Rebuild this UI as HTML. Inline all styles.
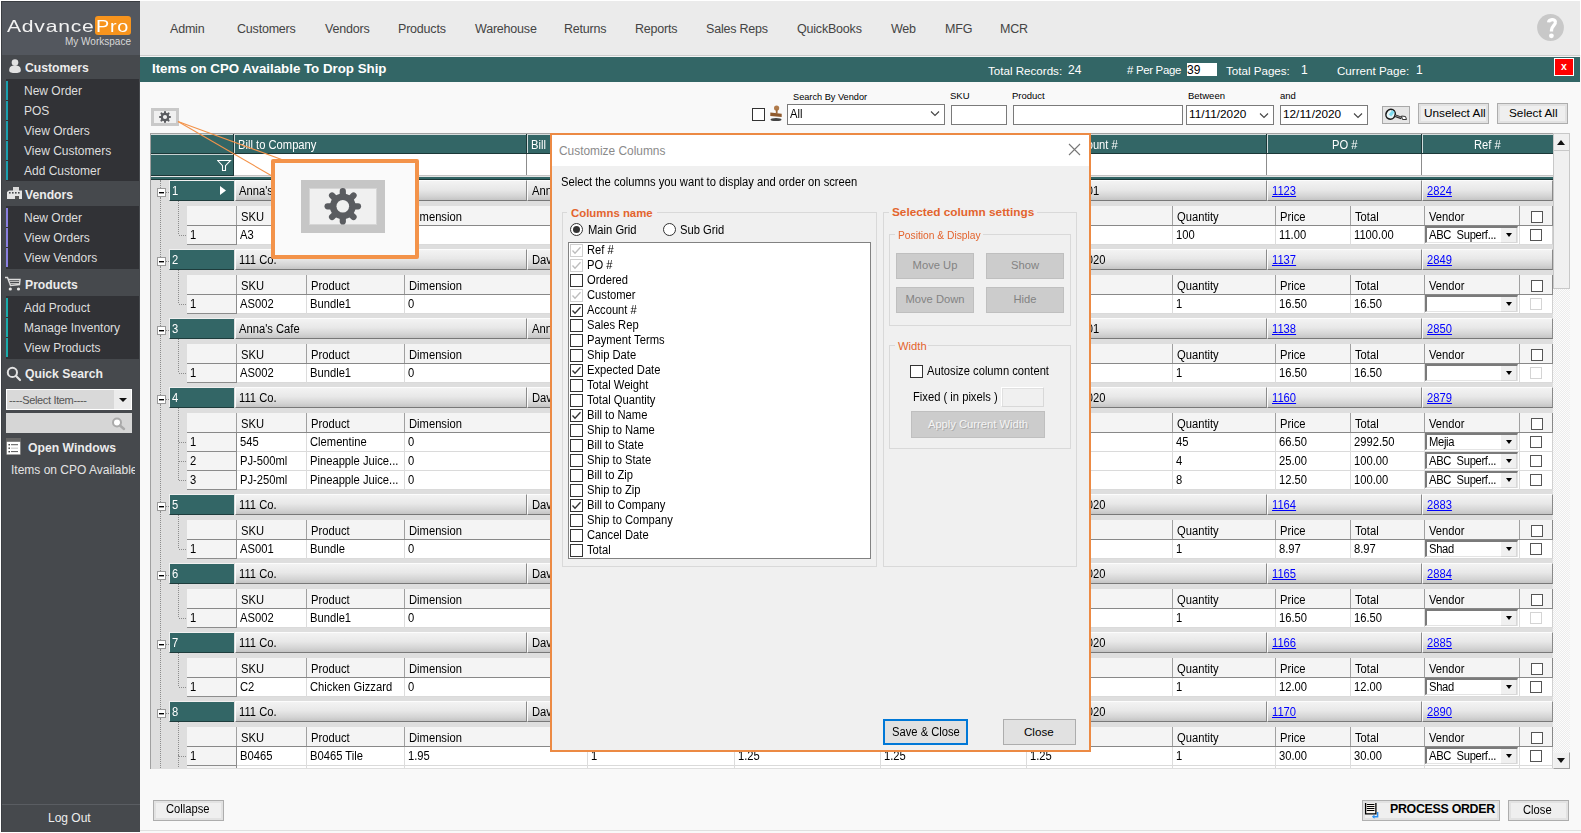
<!DOCTYPE html><html><head><meta charset="utf-8"><style>
*{margin:0;padding:0;box-sizing:border-box}
html,body{width:1581px;height:833px;overflow:hidden;background:#fff}
body{position:relative;font-family:"Liberation Sans",sans-serif;color:#000}
div{position:absolute}
svg{position:absolute}
.t{white-space:nowrap;line-height:1}
.nav{font-size:12.5px;color:#444;letter-spacing:-0.2px}
.sbi{font-size:12px;color:#dedede}
.sbh{font-size:12.2px;font-weight:bold;color:#ececec}
.w{font-size:11.2px}
.gh{background:linear-gradient(#f3f3f3,#e8e8e8 45%,#d4d4d4 80%,#c4c4c4);border-right:1px solid #8a8a8a;border-bottom:1px solid #787878;border-top:1px solid #fcfcfc;border-left:1px solid #fcfcfc}
.lnk{color:#0000ff;text-decoration:underline}
.cb{border:1px solid #333;background:#fff}
</style></head><body>
<div style="left:140px;top:55px;width:1441px;height:778px;background:#f9f9f9"></div>
<div style="left:140px;top:1px;width:1440px;height:54px;background:#ebebeb"></div>
<div style="left:140px;top:55px;width:1440px;height:1px;background:#cdcdcd"></div>
<div style="left:140px;top:56px;width:1440px;height:1px;background:#f4f4f4"></div>
<div class="t nav" style="left:170px;top:23px;">Admin</div>
<div class="t nav" style="left:237px;top:23px;">Customers</div>
<div class="t nav" style="left:325px;top:23px;">Vendors</div>
<div class="t nav" style="left:398px;top:23px;">Products</div>
<div class="t nav" style="left:475px;top:23px;">Warehouse</div>
<div class="t nav" style="left:564px;top:23px;">Returns</div>
<div class="t nav" style="left:635px;top:23px;">Reports</div>
<div class="t nav" style="left:706px;top:23px;">Sales Reps</div>
<div class="t nav" style="left:797px;top:23px;">QuickBooks</div>
<div class="t nav" style="left:891px;top:23px;">Web</div>
<div class="t nav" style="left:945px;top:23px;">MFG</div>
<div class="t nav" style="left:1000px;top:23px;">MCR</div>
<svg style="position:absolute;left:1536px;top:13px" width="29" height="29" viewBox="0 0 29 29"><circle cx="14.5" cy="14.5" r="13.4" fill="#c8c8c8"/><path d="M12.6 9.3 C12.9 6.4 19.1 5.4 19.4 9.2 C19.7 12 15.5 13.4 15.5 17 V18.6" fill="none" stroke="#fff" stroke-width="3.3"/><circle cx="15.4" cy="22.8" r="2.4" fill="#fff"/></svg>
<div style="left:1px;top:1px;width:139px;height:831px;background:#46494d"></div>
<div style="left:1px;top:1px;width:1px;height:831px;background:#3b3e43"></div>
<div style="left:1px;top:1px;width:139px;height:1px;background:#3b3e43"></div>
<div style="left:2px;top:2px;width:138px;height:53px;background:#53575e"></div>
<div class="t" style="left:7px;top:18px;font-size:16.5px;color:#f2f2f2;letter-spacing:0.6px;transform:scaleX(1.28);transform-origin:0 0">Advance</div>
<div style="left:95px;top:16px;width:36px;height:19px;background:#f7941d;border-radius:3px"></div>
<div class="t" style="left:96px;top:18px;font-size:16.5px;color:#fff;letter-spacing:0.6px;transform:scaleX(1.2);transform-origin:0 0">Pro</div>
<div class="t" style="left:65px;top:37px;font-size:10px;color:#d8d8d8">My Workspace</div>
<div class="t sbh" style="left:25px;top:62px;">Customers</div>
<svg style="position:absolute;left:8px;top:58px" width="14" height="16" viewBox="0 0 14 16"><circle cx="7" cy="4.6" r="3.3" fill="#e2e2e2"/><path d="M1.2 12.5 C1.2 8.5 3.5 7.6 7 7.6 C10.5 7.6 12.8 8.5 12.8 12.5 C12.8 14.6 10 15 7 15 C4 15 1.2 14.6 1.2 12.5Z" fill="#e2e2e2"/></svg>
<div style="left:6px;top:79px;width:133px;height:102px;background:#313236"></div>
<div style="left:6px;top:81px;width:2px;height:19px;background:#1b9fae"></div>
<div class="t sbi" style="left:24px;top:85px;">New Order</div>
<div style="left:6px;top:101px;width:2px;height:19px;background:#1b9fae"></div>
<div class="t sbi" style="left:24px;top:105px;">POS</div>
<div style="left:6px;top:121px;width:2px;height:19px;background:#1b9fae"></div>
<div class="t sbi" style="left:24px;top:125px;">View Orders</div>
<div style="left:6px;top:141px;width:2px;height:19px;background:#1b9fae"></div>
<div class="t sbi" style="left:24px;top:145px;">View Customers</div>
<div style="left:6px;top:161px;width:2px;height:19px;background:#1b9fae"></div>
<div class="t sbi" style="left:24px;top:165px;">Add Customer</div>
<div class="t sbh" style="left:25px;top:189px;">Vendors</div>
<svg style="position:absolute;left:6px;top:186px" width="17" height="14" viewBox="0 0 17 14"><rect x="7" y="1" width="6" height="5" fill="#d8d8d8"/><path d="M1 6 L3 4.5 L16 4.5 L16 13 L1 13Z" fill="#e4e4e4"/><rect x="3" y="6" width="1.6" height="1.6" fill="#46494d"/><rect x="6" y="6" width="1.6" height="1.6" fill="#46494d"/><rect x="9" y="6" width="1.6" height="1.6" fill="#46494d"/><rect x="12" y="6" width="1.6" height="1.6" fill="#46494d"/><rect x="9" y="10" width="4" height="3" fill="#555"/></svg>
<div style="left:6px;top:206px;width:133px;height:63px;background:#313236"></div>
<div style="left:6px;top:208px;width:2px;height:19px;background:#8a80e0"></div>
<div class="t sbi" style="left:24px;top:212px;">New Order</div>
<div style="left:6px;top:228px;width:2px;height:19px;background:#8a80e0"></div>
<div class="t sbi" style="left:24px;top:232px;">View Orders</div>
<div style="left:6px;top:248px;width:2px;height:19px;background:#8a80e0"></div>
<div class="t sbi" style="left:24px;top:252px;">View Vendors</div>
<div class="t sbh" style="left:25px;top:279px;">Products</div>
<svg style="position:absolute;left:4px;top:276px" width="18" height="16" viewBox="0 0 18 16"><path d="M1 1.5 L3.5 1.5 L6.5 9.5 L15.5 8.5 L16 3.5 L4.5 3.5" fill="none" stroke="#dcdcdc" stroke-width="1.4"/><path d="M5 5.5 H15 M5.7 7.5 H15" stroke="#bbb" stroke-width="1"/><circle cx="6.3" cy="13" r="1.6" fill="#e6e6e6"/><circle cx="14.5" cy="13" r="1.6" fill="#e6e6e6"/></svg>
<div style="left:6px;top:296px;width:133px;height:63px;background:#313236"></div>
<div style="left:6px;top:298px;width:2px;height:19px;background:#1aabab"></div>
<div class="t sbi" style="left:24px;top:302px;">Add Product</div>
<div style="left:6px;top:318px;width:2px;height:19px;background:#1aabab"></div>
<div class="t sbi" style="left:24px;top:322px;">Manage Inventory</div>
<div style="left:6px;top:338px;width:2px;height:19px;background:#1aabab"></div>
<div class="t sbi" style="left:24px;top:342px;">View Products</div>
<div class="t sbh" style="left:25px;top:368px;">Quick Search</div>
<svg style="position:absolute;left:5px;top:365px" width="18" height="18" viewBox="0 0 18 18"><circle cx="7.4" cy="7.4" r="4.6" fill="none" stroke="#e2e2e2" stroke-width="2"/><path d="M10.8 10.8 L15 15" stroke="#e2e2e2" stroke-width="2.2" stroke-linecap="round"/></svg>
<div style="left:6px;top:389px;width:126px;height:21px;background:#d9d9d9;border:1px solid #fff"></div>
<div style="left:114px;top:390px;width:17px;height:19px;background:#ececec"></div>
<div class="t" style="left:9px;top:395px;font-size:11px;color:#555;letter-spacing:-0.35px">----Select Item----</div>
<div style="left:119px;top:398px;width:0;height:0;border-left:4px solid transparent;border-right:4px solid transparent;border-top:4px solid #111"></div>
<div style="left:6px;top:413px;width:126px;height:20px;background:#d6d6d6"></div>
<svg style="position:absolute;left:110px;top:416px" width="18" height="16" viewBox="0 0 18 16"><circle cx="7" cy="6.5" r="4" fill="#fff" stroke="#aaa" stroke-width="2"/><path d="M10 9.5 L14 13" stroke="#aaa" stroke-width="2.4" stroke-linecap="round"/></svg>
<div class="t sbh" style="left:28px;top:442px;">Open Windows</div>
<svg style="position:absolute;left:6px;top:438px" width="15" height="17" viewBox="0 0 15 17"><rect x="0" y="0" width="15" height="17" fill="#666"/><rect x="0.8" y="3.8" width="13.4" height="12.6" fill="#fff"/><rect x="2.5" y="6" width="1.4" height="1.4" fill="#333"/><rect x="5" y="6.2" width="7" height="1" fill="#555"/><rect x="2.5" y="9.5" width="1.4" height="1.4" fill="#333"/><rect x="5" y="9.6" width="7" height="1.2" fill="#ccc"/><rect x="2.5" y="13" width="1.4" height="1.4" fill="#333"/><rect x="5" y="13.1" width="7" height="1" fill="#555"/></svg>
<div style="left:2px;top:455px;width:133px;height:30px;overflow:hidden"><div class="t" style="left:9px;top:9px;font-size:12px;color:#e4e4e4">Items on CPO Available</div></div>
<div style="left:2px;top:804px;width:138px;height:1px;background:#5a5d62"></div>
<div class="t" style="left:48px;top:812px;font-size:12px;color:#eee">Log Out</div>
<div style="left:140px;top:57px;width:1440px;height:25px;background:#336666"></div>
<div class="t" style="left:152px;top:62px;font-size:13.3px;font-weight:bold;color:#fff">Items on CPO Available To Drop Ship</div>
<div class="t" style="left:988px;top:65px;font-size:11.6px;color:#fff">Total Records:</div>
<div class="t" style="left:1068px;top:64px;font-size:12px;color:#fff">24</div>
<div class="t" style="left:1127px;top:65px;font-size:11.4px;letter-spacing:-0.3px;color:#fff"># Per Page</div>
<div style="left:1187px;top:63px;width:30px;height:13px;background:#fff"></div>
<div class="t" style="left:1187px;top:64px;font-size:12px;color:#000">39</div>
<div class="t" style="left:1226px;top:65px;font-size:11.6px;color:#fff">Total Pages:</div>
<div class="t" style="left:1301px;top:64px;font-size:12px;color:#fff">1</div>
<div class="t" style="left:1337px;top:65px;font-size:11.6px;color:#fff">Current Page:</div>
<div class="t" style="left:1416px;top:64px;font-size:12px;color:#fff">1</div>
<div style="left:1554px;top:58px;width:20px;height:18px;background:#f00;border:1px solid #fff"></div>
<div class="t" style="left:1561px;top:61px;font-size:10.5px;font-weight:bold;color:#fff">x</div>
<div style="left:151px;top:108px;width:28px;height:18px;background:#f0f0f0;border:3px solid #c9c9c9"></div>
<svg style="left:157px;top:109px" width="16" height="16"><g transform="translate(8,8)"><circle r="4.3" fill="#5a5c60"/><line x1="0" y1="-3.6" x2="0" y2="-5" stroke="#5a5c60" stroke-width="2.1" stroke-linecap="round" transform="rotate(0)"/><line x1="0" y1="-3.6" x2="0" y2="-5" stroke="#5a5c60" stroke-width="2.1" stroke-linecap="round" transform="rotate(45)"/><line x1="0" y1="-3.6" x2="0" y2="-5" stroke="#5a5c60" stroke-width="2.1" stroke-linecap="round" transform="rotate(90)"/><line x1="0" y1="-3.6" x2="0" y2="-5" stroke="#5a5c60" stroke-width="2.1" stroke-linecap="round" transform="rotate(135)"/><line x1="0" y1="-3.6" x2="0" y2="-5" stroke="#5a5c60" stroke-width="2.1" stroke-linecap="round" transform="rotate(180)"/><line x1="0" y1="-3.6" x2="0" y2="-5" stroke="#5a5c60" stroke-width="2.1" stroke-linecap="round" transform="rotate(225)"/><line x1="0" y1="-3.6" x2="0" y2="-5" stroke="#5a5c60" stroke-width="2.1" stroke-linecap="round" transform="rotate(270)"/><line x1="0" y1="-3.6" x2="0" y2="-5" stroke="#5a5c60" stroke-width="2.1" stroke-linecap="round" transform="rotate(315)"/><circle r="2.1" fill="#f0f0f0"/></g></svg>
<div style="left:752px;top:108px;width:13px;height:13px;border:1px solid #333;background:#fff"></div>
<svg style="position:absolute;left:769px;top:105px" width="14" height="17" viewBox="0 0 14 17"><circle cx="7.6" cy="3" r="2.6" fill="#b07a4a"/><rect x="6.8" y="4.5" width="1.8" height="4" fill="#a06a3a"/><path d="M1.3 7.5 L12.7 8.8 L12.7 12 L1.3 11 Z" fill="#8f5a2e"/><ellipse cx="7" cy="14.5" rx="5.5" ry="1.6" fill="#444"/></svg>
<div class="t" style="left:793px;top:93px;font-size:9.2px;color:#000">Search By Vendor</div>
<div style="left:787px;top:104px;width:158px;height:21px;background:#fff;border:1px solid #7a7a7a"></div>
<div class="t" style="left:790px;top:109px;font-size:12px;transform:scaleX(0.933);transform-origin:0 0;margin-top:-1px">All</div>
<svg style="position:absolute;left:930px;top:110px" width="10" height="7" viewBox="0 0 10 7"><path d="M1 1.5 L5 5.5 L9 1.5" fill="none" stroke="#444" stroke-width="1.1"/></svg>
<div class="t" style="left:950px;top:91px;font-size:9.5px;color:#000">SKU</div>
<div style="left:951px;top:105px;width:56px;height:20px;background:#fff;border:1px solid #7a7a7a"></div>
<div class="t" style="left:1012px;top:91px;font-size:9.5px;color:#000">Product</div>
<div style="left:1013px;top:105px;width:170px;height:20px;background:#fff;border:1px solid #7a7a7a"></div>
<div class="t" style="left:1188px;top:91px;font-size:9.5px;color:#000">Between</div>
<div style="left:1186px;top:105px;width:88px;height:20px;background:#fff;border:1px solid #7a7a7a"></div>
<div class="t" style="left:1189px;top:109px;font-size:11.8px">11/11/2020</div>
<svg style="position:absolute;left:1259px;top:112px" width="10" height="7" viewBox="0 0 10 7"><path d="M1 1.5 L5 5.5 L9 1.5" fill="none" stroke="#444" stroke-width="1.1"/></svg>
<div class="t" style="left:1280px;top:91px;font-size:9.5px;color:#000">and</div>
<div style="left:1280px;top:105px;width:88px;height:20px;background:#fff;border:1px solid #7a7a7a"></div>
<div class="t" style="left:1283px;top:109px;font-size:11.8px">12/11/2020</div>
<svg style="position:absolute;left:1353px;top:112px" width="10" height="7" viewBox="0 0 10 7"><path d="M1 1.5 L5 5.5 L9 1.5" fill="none" stroke="#444" stroke-width="1.1"/></svg>
<div style="left:1382px;top:106px;width:28px;height:18px;background:#e6e6e6;border:1px solid #a8a8a8"></div>
<svg style="position:absolute;left:1384px;top:107px" width="26" height="16" viewBox="0 0 26 16"><ellipse cx="6.6" cy="7.3" rx="4.6" ry="5" transform="rotate(25 6.6 7.3)" fill="#e8f6f8" stroke="#1a1a1a" stroke-width="1.6"/><path d="M6 8.5 L9.5 4" stroke="#7fdcf0" stroke-width="3"/><path d="M10.5 8.5 L17.5 11" stroke="#222" stroke-width="2.6"/><path d="M11 8.6 L17 10.6" stroke="#bbb" stroke-width="0.7"/><path d="M17.5 9 L21.5 9.5 L22.5 12.5 L18.5 12.5 Z" fill="#fff" stroke="#333" stroke-width="1"/></svg>
<div style="left:1418px;top:103px;width:71px;height:21px;background:#efefef;border:1px solid #adadad;box-shadow:inset 0 0 0 2px #e2e2e2"></div>
<div class="t" style="left:1424px;top:108px;font-size:11.8px">Unselect All</div>
<div style="left:1497px;top:103px;width:71px;height:21px;background:#efefef;border:1px solid #adadad;box-shadow:inset 0 0 0 2px #e2e2e2"></div>
<div class="t" style="left:1509px;top:108px;font-size:11.8px">Select All</div>
<div style="left:150px;top:133px;width:1420px;height:636px;background:#dedede;border:1px solid #a0a0a0;border-right:none;border-bottom:none"></div>
<div style="left:151px;top:134px;width:1402px;height:1px;background:#d6dcdc"></div>
<div style="left:151px;top:135px;width:1402px;height:18px;background:#336666"></div>
<div style="left:151px;top:153px;width:1402px;height:1px;background:#1c3838"></div>
<div style="left:151px;top:154px;width:83px;height:21px;background:#336666"></div>
<div style="left:234px;top:154px;width:1319px;height:21px;background:#fff"></div>
<div style="left:233px;top:154px;width:1px;height:21px;background:#1c3838"></div>
<div style="left:151px;top:175px;width:1402px;height:1px;background:#c4c4c4"></div>
<div style="left:151px;top:154px;width:82px;height:1px;background:#c8d2d2"></div>
<div style="left:151px;top:175px;width:83px;height:1px;background:#1c3838"></div>
<div style="left:151px;top:176px;width:1402px;height:1px;background:#e4e4e4"></div>
<div style="left:151px;top:177px;width:1402px;height:2px;background:#336666"></div>
<div style="left:151px;top:179px;width:1402px;height:1px;background:#1c3838"></div>
<div style="left:233px;top:134px;width:1px;height:19px;background:#1c3838"></div>
<div style="left:234px;top:135px;width:1px;height:18px;background:#d0dcdc"></div>
<div style="left:526px;top:134px;width:1px;height:19px;background:#1c3838"></div>
<div style="left:527px;top:135px;width:1px;height:18px;background:#d0dcdc"></div>
<div style="left:526px;top:154px;width:1px;height:21px;background:#8c8c8c"></div>
<div style="left:1266px;top:134px;width:1px;height:19px;background:#1c3838"></div>
<div style="left:1267px;top:135px;width:1px;height:18px;background:#d0dcdc"></div>
<div style="left:1266px;top:154px;width:1px;height:21px;background:#8c8c8c"></div>
<div style="left:1421px;top:134px;width:1px;height:19px;background:#1c3838"></div>
<div style="left:1422px;top:135px;width:1px;height:18px;background:#d0dcdc"></div>
<div style="left:1421px;top:154px;width:1px;height:21px;background:#8c8c8c"></div>
<div style="left:1553px;top:133px;width:1px;height:636px;background:#c8c8c8"></div>
<div class="t" style="left:238px;top:140px;font-size:12px;transform:scaleX(0.933);transform-origin:0 0;margin-top:-1px;color:#fff">Bill to Company</div>
<div class="t" style="left:531px;top:140px;font-size:12px;transform:scaleX(0.933);transform-origin:0 0;margin-top:-1px;color:#fff">Bill</div>
<div class="t" style="left:1068px;top:140px;font-size:12px;transform:scaleX(0.933);transform-origin:0 0;margin-top:-1px;color:#fff">Account #</div>
<div class="t" style="left:1332px;top:140px;font-size:12px;transform:scaleX(0.933);transform-origin:0 0;margin-top:-1px;color:#fff">PO #</div>
<div class="t" style="left:1474px;top:140px;font-size:12px;transform:scaleX(0.933);transform-origin:0 0;margin-top:-1px;color:#fff">Ref #</div>
<svg style="position:absolute;left:217px;top:160px" width="15" height="12" viewBox="0 0 15 12"><path d="M0.7 0.5 H13.5 L8.5 5.7 V10.5 H5.5 V5.7 Z" fill="none" stroke="#fff" stroke-width="1.1"/></svg>
<div style="left:151px;top:180px;width:1402px;height:588px;overflow:hidden">
<div style="left:9px;top:0px;width:1px;height:8px;border-left:1px dotted #8c8c8c"></div>
<div style="left:15px;top:12px;width:3px;height:1px;border-top:1px dotted #8c8c8c"></div>
<div style="left:6px;top:8px;width:9px;height:9px;background:#fff;border:1px solid #9a9a9a"></div>
<div style="left:8px;top:12px;width:5px;height:1px;background:#000"></div>
<div style="left:8px;top:13px;width:5px;height:1px;background:#999"></div>
<div style="left:18px;top:0px;width:65px;height:21px;background:#336666;border-top:1px solid #f0f0f0;border-left:1px solid #f0f0f0;border-bottom:1px solid #1e3c3c"></div>
<div class="t" style="left:21px;top:6px;font-size:12px;transform:scaleX(0.933);transform-origin:0 0;margin-top:-1px;color:#fff">1</div>
<svg style="left:68px;top:5px" width="8" height="11"><path d="M1 1 L7 5.5 L1 10 Z" fill="#fff"/></svg>
<div class="gh" style="left:84px;top:0px;width:292px;height:21px;"></div>
<div class="t" style="left:88px;top:6px;font-size:12px;transform:scaleX(0.933);transform-origin:0 0;margin-top:-1px">Anna's Cafe</div>
<div class="gh" style="left:376px;top:0px;width:740px;height:21px;"></div>
<div class="t" style="left:381px;top:6px;font-size:12px;transform:scaleX(0.933);transform-origin:0 0;margin-top:-1px">Anna's Cafe</div>
<div class="t" style="left:917.3px;top:6px;font-size:12px;transform:scaleX(0.933);transform-origin:0 0;margin-top:-1px">10001</div>
<div class="gh" style="left:1116px;top:0px;width:155px;height:21px;"></div>
<div class="t" style="left:1121px;top:6px;font-size:12px;transform:scaleX(0.933);transform-origin:0 0;margin-top:-1px;color:#0000ff;text-decoration:underline">1123</div>
<div class="gh" style="left:1271px;top:0px;width:131px;height:21px;"></div>
<div class="t" style="left:1276px;top:6px;font-size:12px;transform:scaleX(0.933);transform-origin:0 0;margin-top:-1px;color:#0000ff;text-decoration:underline">2824</div>
<div style="left:27px;top:21px;width:1px;height:33px;border-left:1px dotted #8c8c8c"></div>
<div style="left:28px;top:55px;width:7px;height:1px;border-top:1px dotted #8c8c8c"></div>
<div style="left:36px;top:26px;width:1366px;height:20px;background:#f4f4f4;border-bottom:1px solid #888;border-right:1px solid #888"></div>
<div style="left:85px;top:26px;width:1px;height:19px;background:#a0a0a0"></div>
<div class="t" style="left:90px;top:32px;font-size:12px;transform:scaleX(0.933);transform-origin:0 0;margin-top:-1px">SKU</div>
<div style="left:155px;top:26px;width:1px;height:19px;background:#a0a0a0"></div>
<div class="t" style="left:160px;top:32px;font-size:12px;transform:scaleX(0.933);transform-origin:0 0;margin-top:-1px">Product</div>
<div style="left:253px;top:26px;width:1px;height:19px;background:#a0a0a0"></div>
<div class="t" style="left:258px;top:32px;font-size:12px;transform:scaleX(0.933);transform-origin:0 0;margin-top:-1px">Dimension</div>
<div style="left:436px;top:26px;width:1px;height:19px;background:#a0a0a0"></div>
<div style="left:583px;top:26px;width:1px;height:19px;background:#a0a0a0"></div>
<div style="left:729px;top:26px;width:1px;height:19px;background:#a0a0a0"></div>
<div style="left:875px;top:26px;width:1px;height:19px;background:#a0a0a0"></div>
<div style="left:1021px;top:26px;width:1px;height:19px;background:#a0a0a0"></div>
<div class="t" style="left:1026px;top:32px;font-size:12px;transform:scaleX(0.933);transform-origin:0 0;margin-top:-1px">Quantity</div>
<div style="left:1124px;top:26px;width:1px;height:19px;background:#a0a0a0"></div>
<div class="t" style="left:1129px;top:32px;font-size:12px;transform:scaleX(0.933);transform-origin:0 0;margin-top:-1px">Price</div>
<div style="left:1199px;top:26px;width:1px;height:19px;background:#a0a0a0"></div>
<div class="t" style="left:1204px;top:32px;font-size:12px;transform:scaleX(0.933);transform-origin:0 0;margin-top:-1px">Total</div>
<div style="left:1273px;top:26px;width:1px;height:19px;background:#a0a0a0"></div>
<div class="t" style="left:1278px;top:32px;font-size:12px;transform:scaleX(0.933);transform-origin:0 0;margin-top:-1px">Vendor</div>
<div style="left:1368px;top:26px;width:1px;height:19px;background:#a0a0a0"></div>
<div style="left:1380px;top:31px;width:12px;height:12px;border:1px solid #555;background:#fff"></div>
<div style="left:36px;top:46px;width:49px;height:19px;background:#f4f4f4;border-bottom:1px solid #8c8c8c"></div>
<div style="left:86px;top:46px;width:1316px;height:19px;background:#fff;border-bottom:1px solid #dadada;border-right:1px solid #d0d0d0"></div>
<div style="left:85px;top:46px;width:1px;height:19px;background:#8c8c8c"></div>
<div style="left:155px;top:46px;width:1px;height:19px;background:#dcdcdc"></div>
<div style="left:253px;top:46px;width:1px;height:19px;background:#dcdcdc"></div>
<div style="left:436px;top:46px;width:1px;height:19px;background:#dcdcdc"></div>
<div style="left:583px;top:46px;width:1px;height:19px;background:#dcdcdc"></div>
<div style="left:729px;top:46px;width:1px;height:19px;background:#dcdcdc"></div>
<div style="left:875px;top:46px;width:1px;height:19px;background:#dcdcdc"></div>
<div style="left:1021px;top:46px;width:1px;height:19px;background:#dcdcdc"></div>
<div style="left:1124px;top:46px;width:1px;height:19px;background:#dcdcdc"></div>
<div style="left:1199px;top:46px;width:1px;height:19px;background:#dcdcdc"></div>
<div style="left:1273px;top:46px;width:1px;height:19px;background:#dcdcdc"></div>
<div style="left:1368px;top:46px;width:1px;height:19px;background:#dcdcdc"></div>
<div class="t" style="left:39px;top:50px;font-size:12px;transform:scaleX(0.933);transform-origin:0 0;margin-top:-1px">1</div>
<div class="t" style="left:89px;top:50px;font-size:12px;transform:scaleX(0.933);transform-origin:0 0;margin-top:-1px">A3</div>
<div class="t" style="left:440px;top:50px;font-size:12px;transform:scaleX(0.933);transform-origin:0 0;margin-top:-1px">1</div>
<div class="t" style="left:587px;top:50px;font-size:12px;transform:scaleX(0.933);transform-origin:0 0;margin-top:-1px">1.25</div>
<div class="t" style="left:733px;top:50px;font-size:12px;transform:scaleX(0.933);transform-origin:0 0;margin-top:-1px">1.25</div>
<div class="t" style="left:879px;top:50px;font-size:12px;transform:scaleX(0.933);transform-origin:0 0;margin-top:-1px">1.25</div>
<div class="t" style="left:1025px;top:50px;font-size:12px;transform:scaleX(0.933);transform-origin:0 0;margin-top:-1px">100</div>
<div class="t" style="left:1128px;top:50px;font-size:12px;transform:scaleX(0.933);transform-origin:0 0;margin-top:-1px">11.00</div>
<div class="t" style="left:1203px;top:50px;font-size:12px;transform:scaleX(0.933);transform-origin:0 0;margin-top:-1px">1100.00</div>
<div style="left:1274px;top:46px;width:93px;height:17px;background:#fff;border-left:2px solid #7a7a7a;border-top:2px solid #7a7a7a;border-right:1px solid #e4e4e4;border-bottom:1px solid #e4e4e4"></div>
<div style="left:1350px;top:48px;width:16px;height:15px;background:#f0f0f0;border-right:1px solid #d8d8d8;border-bottom:1px solid #d8d8d8"></div>
<div class="t" style="left:1278px;top:50px;font-size:12px;transform:scaleX(0.933);transform-origin:0 0;margin-top:-1px;letter-spacing:-0.35px">ABC&nbsp; Superf...</div>
<div style="left:1355px;top:53px;width:0;height:0;border-left:3.5px solid transparent;border-right:3.5px solid transparent;border-top:4px solid #000"></div>
<div style="left:1379px;top:49px;width:12px;height:12px;border:1px solid #555;background:#fff"></div>
<div style="left:9px;top:17px;width:1px;height:60px;border-left:1px dotted #8c8c8c"></div>
<div style="left:15px;top:81px;width:3px;height:1px;border-top:1px dotted #8c8c8c"></div>
<div style="left:6px;top:77px;width:9px;height:9px;background:#fff;border:1px solid #9a9a9a"></div>
<div style="left:8px;top:81px;width:5px;height:1px;background:#000"></div>
<div style="left:8px;top:82px;width:5px;height:1px;background:#999"></div>
<div style="left:18px;top:69px;width:65px;height:21px;background:#336666;border-top:1px solid #f0f0f0;border-left:1px solid #f0f0f0;border-bottom:1px solid #1e3c3c"></div>
<div class="t" style="left:21px;top:75px;font-size:12px;transform:scaleX(0.933);transform-origin:0 0;margin-top:-1px;color:#fff">2</div>
<div class="gh" style="left:84px;top:69px;width:292px;height:21px;"></div>
<div class="t" style="left:88px;top:75px;font-size:12px;transform:scaleX(0.933);transform-origin:0 0;margin-top:-1px">111 Co.</div>
<div class="gh" style="left:376px;top:69px;width:740px;height:21px;"></div>
<div class="t" style="left:381px;top:75px;font-size:12px;transform:scaleX(0.933);transform-origin:0 0;margin-top:-1px">David</div>
<div class="t" style="left:917.0999999999999px;top:75px;font-size:12px;transform:scaleX(0.933);transform-origin:0 0;margin-top:-1px">102020</div>
<div class="gh" style="left:1116px;top:69px;width:155px;height:21px;"></div>
<div class="t" style="left:1121px;top:75px;font-size:12px;transform:scaleX(0.933);transform-origin:0 0;margin-top:-1px;color:#0000ff;text-decoration:underline">1137</div>
<div class="gh" style="left:1271px;top:69px;width:131px;height:21px;"></div>
<div class="t" style="left:1276px;top:75px;font-size:12px;transform:scaleX(0.933);transform-origin:0 0;margin-top:-1px;color:#0000ff;text-decoration:underline">2849</div>
<div style="left:27px;top:90px;width:1px;height:33px;border-left:1px dotted #8c8c8c"></div>
<div style="left:28px;top:124px;width:7px;height:1px;border-top:1px dotted #8c8c8c"></div>
<div style="left:36px;top:95px;width:1366px;height:20px;background:#f4f4f4;border-bottom:1px solid #888;border-right:1px solid #888"></div>
<div style="left:85px;top:95px;width:1px;height:19px;background:#a0a0a0"></div>
<div class="t" style="left:90px;top:101px;font-size:12px;transform:scaleX(0.933);transform-origin:0 0;margin-top:-1px">SKU</div>
<div style="left:155px;top:95px;width:1px;height:19px;background:#a0a0a0"></div>
<div class="t" style="left:160px;top:101px;font-size:12px;transform:scaleX(0.933);transform-origin:0 0;margin-top:-1px">Product</div>
<div style="left:253px;top:95px;width:1px;height:19px;background:#a0a0a0"></div>
<div class="t" style="left:258px;top:101px;font-size:12px;transform:scaleX(0.933);transform-origin:0 0;margin-top:-1px">Dimension</div>
<div style="left:436px;top:95px;width:1px;height:19px;background:#a0a0a0"></div>
<div style="left:583px;top:95px;width:1px;height:19px;background:#a0a0a0"></div>
<div style="left:729px;top:95px;width:1px;height:19px;background:#a0a0a0"></div>
<div style="left:875px;top:95px;width:1px;height:19px;background:#a0a0a0"></div>
<div style="left:1021px;top:95px;width:1px;height:19px;background:#a0a0a0"></div>
<div class="t" style="left:1026px;top:101px;font-size:12px;transform:scaleX(0.933);transform-origin:0 0;margin-top:-1px">Quantity</div>
<div style="left:1124px;top:95px;width:1px;height:19px;background:#a0a0a0"></div>
<div class="t" style="left:1129px;top:101px;font-size:12px;transform:scaleX(0.933);transform-origin:0 0;margin-top:-1px">Price</div>
<div style="left:1199px;top:95px;width:1px;height:19px;background:#a0a0a0"></div>
<div class="t" style="left:1204px;top:101px;font-size:12px;transform:scaleX(0.933);transform-origin:0 0;margin-top:-1px">Total</div>
<div style="left:1273px;top:95px;width:1px;height:19px;background:#a0a0a0"></div>
<div class="t" style="left:1278px;top:101px;font-size:12px;transform:scaleX(0.933);transform-origin:0 0;margin-top:-1px">Vendor</div>
<div style="left:1368px;top:95px;width:1px;height:19px;background:#a0a0a0"></div>
<div style="left:1380px;top:100px;width:12px;height:12px;border:1px solid #555;background:#fff"></div>
<div style="left:36px;top:115px;width:49px;height:19px;background:#f4f4f4;border-bottom:1px solid #8c8c8c"></div>
<div style="left:86px;top:115px;width:1316px;height:19px;background:#fff;border-bottom:1px solid #dadada;border-right:1px solid #d0d0d0"></div>
<div style="left:85px;top:115px;width:1px;height:19px;background:#8c8c8c"></div>
<div style="left:155px;top:115px;width:1px;height:19px;background:#dcdcdc"></div>
<div style="left:253px;top:115px;width:1px;height:19px;background:#dcdcdc"></div>
<div style="left:436px;top:115px;width:1px;height:19px;background:#dcdcdc"></div>
<div style="left:583px;top:115px;width:1px;height:19px;background:#dcdcdc"></div>
<div style="left:729px;top:115px;width:1px;height:19px;background:#dcdcdc"></div>
<div style="left:875px;top:115px;width:1px;height:19px;background:#dcdcdc"></div>
<div style="left:1021px;top:115px;width:1px;height:19px;background:#dcdcdc"></div>
<div style="left:1124px;top:115px;width:1px;height:19px;background:#dcdcdc"></div>
<div style="left:1199px;top:115px;width:1px;height:19px;background:#dcdcdc"></div>
<div style="left:1273px;top:115px;width:1px;height:19px;background:#dcdcdc"></div>
<div style="left:1368px;top:115px;width:1px;height:19px;background:#dcdcdc"></div>
<div class="t" style="left:39px;top:119px;font-size:12px;transform:scaleX(0.933);transform-origin:0 0;margin-top:-1px">1</div>
<div class="t" style="left:89px;top:119px;font-size:12px;transform:scaleX(0.933);transform-origin:0 0;margin-top:-1px">AS002</div>
<div class="t" style="left:159px;top:119px;font-size:12px;transform:scaleX(0.933);transform-origin:0 0;margin-top:-1px">Bundle1</div>
<div class="t" style="left:257px;top:119px;font-size:12px;transform:scaleX(0.933);transform-origin:0 0;margin-top:-1px">0</div>
<div class="t" style="left:440px;top:119px;font-size:12px;transform:scaleX(0.933);transform-origin:0 0;margin-top:-1px">1</div>
<div class="t" style="left:587px;top:119px;font-size:12px;transform:scaleX(0.933);transform-origin:0 0;margin-top:-1px">1.25</div>
<div class="t" style="left:733px;top:119px;font-size:12px;transform:scaleX(0.933);transform-origin:0 0;margin-top:-1px">1.25</div>
<div class="t" style="left:879px;top:119px;font-size:12px;transform:scaleX(0.933);transform-origin:0 0;margin-top:-1px">1.25</div>
<div class="t" style="left:1025px;top:119px;font-size:12px;transform:scaleX(0.933);transform-origin:0 0;margin-top:-1px">1</div>
<div class="t" style="left:1128px;top:119px;font-size:12px;transform:scaleX(0.933);transform-origin:0 0;margin-top:-1px">16.50</div>
<div class="t" style="left:1203px;top:119px;font-size:12px;transform:scaleX(0.933);transform-origin:0 0;margin-top:-1px">16.50</div>
<div style="left:1274px;top:115px;width:93px;height:17px;background:#fff;border-left:2px solid #7a7a7a;border-top:2px solid #7a7a7a;border-right:1px solid #e4e4e4;border-bottom:1px solid #e4e4e4"></div>
<div style="left:1350px;top:117px;width:16px;height:15px;background:#f0f0f0;border-right:1px solid #d8d8d8;border-bottom:1px solid #d8d8d8"></div>
<div style="left:1355px;top:122px;width:0;height:0;border-left:3.5px solid transparent;border-right:3.5px solid transparent;border-top:4px solid #000"></div>
<div style="left:1379px;top:118px;width:12px;height:12px;border:1px solid #d4d4d4;background:#fff"></div>
<div style="left:9px;top:86px;width:1px;height:60px;border-left:1px dotted #8c8c8c"></div>
<div style="left:15px;top:150px;width:3px;height:1px;border-top:1px dotted #8c8c8c"></div>
<div style="left:6px;top:146px;width:9px;height:9px;background:#fff;border:1px solid #9a9a9a"></div>
<div style="left:8px;top:150px;width:5px;height:1px;background:#000"></div>
<div style="left:8px;top:151px;width:5px;height:1px;background:#999"></div>
<div style="left:18px;top:138px;width:65px;height:21px;background:#336666;border-top:1px solid #f0f0f0;border-left:1px solid #f0f0f0;border-bottom:1px solid #1e3c3c"></div>
<div class="t" style="left:21px;top:144px;font-size:12px;transform:scaleX(0.933);transform-origin:0 0;margin-top:-1px;color:#fff">3</div>
<div class="gh" style="left:84px;top:138px;width:292px;height:21px;"></div>
<div class="t" style="left:88px;top:144px;font-size:12px;transform:scaleX(0.933);transform-origin:0 0;margin-top:-1px">Anna's Cafe</div>
<div class="gh" style="left:376px;top:138px;width:740px;height:21px;"></div>
<div class="t" style="left:381px;top:144px;font-size:12px;transform:scaleX(0.933);transform-origin:0 0;margin-top:-1px">Anna's Cafe</div>
<div class="t" style="left:917.3px;top:144px;font-size:12px;transform:scaleX(0.933);transform-origin:0 0;margin-top:-1px">10001</div>
<div class="gh" style="left:1116px;top:138px;width:155px;height:21px;"></div>
<div class="t" style="left:1121px;top:144px;font-size:12px;transform:scaleX(0.933);transform-origin:0 0;margin-top:-1px;color:#0000ff;text-decoration:underline">1138</div>
<div class="gh" style="left:1271px;top:138px;width:131px;height:21px;"></div>
<div class="t" style="left:1276px;top:144px;font-size:12px;transform:scaleX(0.933);transform-origin:0 0;margin-top:-1px;color:#0000ff;text-decoration:underline">2850</div>
<div style="left:27px;top:159px;width:1px;height:33px;border-left:1px dotted #8c8c8c"></div>
<div style="left:28px;top:193px;width:7px;height:1px;border-top:1px dotted #8c8c8c"></div>
<div style="left:36px;top:164px;width:1366px;height:20px;background:#f4f4f4;border-bottom:1px solid #888;border-right:1px solid #888"></div>
<div style="left:85px;top:164px;width:1px;height:19px;background:#a0a0a0"></div>
<div class="t" style="left:90px;top:170px;font-size:12px;transform:scaleX(0.933);transform-origin:0 0;margin-top:-1px">SKU</div>
<div style="left:155px;top:164px;width:1px;height:19px;background:#a0a0a0"></div>
<div class="t" style="left:160px;top:170px;font-size:12px;transform:scaleX(0.933);transform-origin:0 0;margin-top:-1px">Product</div>
<div style="left:253px;top:164px;width:1px;height:19px;background:#a0a0a0"></div>
<div class="t" style="left:258px;top:170px;font-size:12px;transform:scaleX(0.933);transform-origin:0 0;margin-top:-1px">Dimension</div>
<div style="left:436px;top:164px;width:1px;height:19px;background:#a0a0a0"></div>
<div style="left:583px;top:164px;width:1px;height:19px;background:#a0a0a0"></div>
<div style="left:729px;top:164px;width:1px;height:19px;background:#a0a0a0"></div>
<div style="left:875px;top:164px;width:1px;height:19px;background:#a0a0a0"></div>
<div style="left:1021px;top:164px;width:1px;height:19px;background:#a0a0a0"></div>
<div class="t" style="left:1026px;top:170px;font-size:12px;transform:scaleX(0.933);transform-origin:0 0;margin-top:-1px">Quantity</div>
<div style="left:1124px;top:164px;width:1px;height:19px;background:#a0a0a0"></div>
<div class="t" style="left:1129px;top:170px;font-size:12px;transform:scaleX(0.933);transform-origin:0 0;margin-top:-1px">Price</div>
<div style="left:1199px;top:164px;width:1px;height:19px;background:#a0a0a0"></div>
<div class="t" style="left:1204px;top:170px;font-size:12px;transform:scaleX(0.933);transform-origin:0 0;margin-top:-1px">Total</div>
<div style="left:1273px;top:164px;width:1px;height:19px;background:#a0a0a0"></div>
<div class="t" style="left:1278px;top:170px;font-size:12px;transform:scaleX(0.933);transform-origin:0 0;margin-top:-1px">Vendor</div>
<div style="left:1368px;top:164px;width:1px;height:19px;background:#a0a0a0"></div>
<div style="left:1380px;top:169px;width:12px;height:12px;border:1px solid #555;background:#fff"></div>
<div style="left:36px;top:184px;width:49px;height:19px;background:#f4f4f4;border-bottom:1px solid #8c8c8c"></div>
<div style="left:86px;top:184px;width:1316px;height:19px;background:#fff;border-bottom:1px solid #dadada;border-right:1px solid #d0d0d0"></div>
<div style="left:85px;top:184px;width:1px;height:19px;background:#8c8c8c"></div>
<div style="left:155px;top:184px;width:1px;height:19px;background:#dcdcdc"></div>
<div style="left:253px;top:184px;width:1px;height:19px;background:#dcdcdc"></div>
<div style="left:436px;top:184px;width:1px;height:19px;background:#dcdcdc"></div>
<div style="left:583px;top:184px;width:1px;height:19px;background:#dcdcdc"></div>
<div style="left:729px;top:184px;width:1px;height:19px;background:#dcdcdc"></div>
<div style="left:875px;top:184px;width:1px;height:19px;background:#dcdcdc"></div>
<div style="left:1021px;top:184px;width:1px;height:19px;background:#dcdcdc"></div>
<div style="left:1124px;top:184px;width:1px;height:19px;background:#dcdcdc"></div>
<div style="left:1199px;top:184px;width:1px;height:19px;background:#dcdcdc"></div>
<div style="left:1273px;top:184px;width:1px;height:19px;background:#dcdcdc"></div>
<div style="left:1368px;top:184px;width:1px;height:19px;background:#dcdcdc"></div>
<div class="t" style="left:39px;top:188px;font-size:12px;transform:scaleX(0.933);transform-origin:0 0;margin-top:-1px">1</div>
<div class="t" style="left:89px;top:188px;font-size:12px;transform:scaleX(0.933);transform-origin:0 0;margin-top:-1px">AS002</div>
<div class="t" style="left:159px;top:188px;font-size:12px;transform:scaleX(0.933);transform-origin:0 0;margin-top:-1px">Bundle1</div>
<div class="t" style="left:257px;top:188px;font-size:12px;transform:scaleX(0.933);transform-origin:0 0;margin-top:-1px">0</div>
<div class="t" style="left:440px;top:188px;font-size:12px;transform:scaleX(0.933);transform-origin:0 0;margin-top:-1px">1</div>
<div class="t" style="left:587px;top:188px;font-size:12px;transform:scaleX(0.933);transform-origin:0 0;margin-top:-1px">1.25</div>
<div class="t" style="left:733px;top:188px;font-size:12px;transform:scaleX(0.933);transform-origin:0 0;margin-top:-1px">1.25</div>
<div class="t" style="left:879px;top:188px;font-size:12px;transform:scaleX(0.933);transform-origin:0 0;margin-top:-1px">1.25</div>
<div class="t" style="left:1025px;top:188px;font-size:12px;transform:scaleX(0.933);transform-origin:0 0;margin-top:-1px">1</div>
<div class="t" style="left:1128px;top:188px;font-size:12px;transform:scaleX(0.933);transform-origin:0 0;margin-top:-1px">16.50</div>
<div class="t" style="left:1203px;top:188px;font-size:12px;transform:scaleX(0.933);transform-origin:0 0;margin-top:-1px">16.50</div>
<div style="left:1274px;top:184px;width:93px;height:17px;background:#fff;border-left:2px solid #7a7a7a;border-top:2px solid #7a7a7a;border-right:1px solid #e4e4e4;border-bottom:1px solid #e4e4e4"></div>
<div style="left:1350px;top:186px;width:16px;height:15px;background:#f0f0f0;border-right:1px solid #d8d8d8;border-bottom:1px solid #d8d8d8"></div>
<div style="left:1355px;top:191px;width:0;height:0;border-left:3.5px solid transparent;border-right:3.5px solid transparent;border-top:4px solid #000"></div>
<div style="left:1379px;top:187px;width:12px;height:12px;border:1px solid #d4d4d4;background:#fff"></div>
<div style="left:9px;top:155px;width:1px;height:60px;border-left:1px dotted #8c8c8c"></div>
<div style="left:15px;top:219px;width:3px;height:1px;border-top:1px dotted #8c8c8c"></div>
<div style="left:6px;top:215px;width:9px;height:9px;background:#fff;border:1px solid #9a9a9a"></div>
<div style="left:8px;top:219px;width:5px;height:1px;background:#000"></div>
<div style="left:8px;top:220px;width:5px;height:1px;background:#999"></div>
<div style="left:18px;top:207px;width:65px;height:21px;background:#336666;border-top:1px solid #f0f0f0;border-left:1px solid #f0f0f0;border-bottom:1px solid #1e3c3c"></div>
<div class="t" style="left:21px;top:213px;font-size:12px;transform:scaleX(0.933);transform-origin:0 0;margin-top:-1px;color:#fff">4</div>
<div class="gh" style="left:84px;top:207px;width:292px;height:21px;"></div>
<div class="t" style="left:88px;top:213px;font-size:12px;transform:scaleX(0.933);transform-origin:0 0;margin-top:-1px">111 Co.</div>
<div class="gh" style="left:376px;top:207px;width:740px;height:21px;"></div>
<div class="t" style="left:381px;top:213px;font-size:12px;transform:scaleX(0.933);transform-origin:0 0;margin-top:-1px">David</div>
<div class="t" style="left:917.0999999999999px;top:213px;font-size:12px;transform:scaleX(0.933);transform-origin:0 0;margin-top:-1px">102020</div>
<div class="gh" style="left:1116px;top:207px;width:155px;height:21px;"></div>
<div class="t" style="left:1121px;top:213px;font-size:12px;transform:scaleX(0.933);transform-origin:0 0;margin-top:-1px;color:#0000ff;text-decoration:underline">1160</div>
<div class="gh" style="left:1271px;top:207px;width:131px;height:21px;"></div>
<div class="t" style="left:1276px;top:213px;font-size:12px;transform:scaleX(0.933);transform-origin:0 0;margin-top:-1px;color:#0000ff;text-decoration:underline">2879</div>
<div style="left:27px;top:228px;width:1px;height:33px;border-left:1px dotted #8c8c8c"></div>
<div style="left:28px;top:262px;width:7px;height:1px;border-top:1px dotted #8c8c8c"></div>
<div style="left:28px;top:281px;width:7px;height:1px;border-top:1px dotted #8c8c8c"></div>
<div style="left:28px;top:300px;width:7px;height:1px;border-top:1px dotted #8c8c8c"></div>
<div style="left:27px;top:261px;width:1px;height:39px;border-left:1px dotted #8c8c8c"></div>
<div style="left:36px;top:233px;width:1366px;height:20px;background:#f4f4f4;border-bottom:1px solid #888;border-right:1px solid #888"></div>
<div style="left:85px;top:233px;width:1px;height:19px;background:#a0a0a0"></div>
<div class="t" style="left:90px;top:239px;font-size:12px;transform:scaleX(0.933);transform-origin:0 0;margin-top:-1px">SKU</div>
<div style="left:155px;top:233px;width:1px;height:19px;background:#a0a0a0"></div>
<div class="t" style="left:160px;top:239px;font-size:12px;transform:scaleX(0.933);transform-origin:0 0;margin-top:-1px">Product</div>
<div style="left:253px;top:233px;width:1px;height:19px;background:#a0a0a0"></div>
<div class="t" style="left:258px;top:239px;font-size:12px;transform:scaleX(0.933);transform-origin:0 0;margin-top:-1px">Dimension</div>
<div style="left:436px;top:233px;width:1px;height:19px;background:#a0a0a0"></div>
<div style="left:583px;top:233px;width:1px;height:19px;background:#a0a0a0"></div>
<div style="left:729px;top:233px;width:1px;height:19px;background:#a0a0a0"></div>
<div style="left:875px;top:233px;width:1px;height:19px;background:#a0a0a0"></div>
<div style="left:1021px;top:233px;width:1px;height:19px;background:#a0a0a0"></div>
<div class="t" style="left:1026px;top:239px;font-size:12px;transform:scaleX(0.933);transform-origin:0 0;margin-top:-1px">Quantity</div>
<div style="left:1124px;top:233px;width:1px;height:19px;background:#a0a0a0"></div>
<div class="t" style="left:1129px;top:239px;font-size:12px;transform:scaleX(0.933);transform-origin:0 0;margin-top:-1px">Price</div>
<div style="left:1199px;top:233px;width:1px;height:19px;background:#a0a0a0"></div>
<div class="t" style="left:1204px;top:239px;font-size:12px;transform:scaleX(0.933);transform-origin:0 0;margin-top:-1px">Total</div>
<div style="left:1273px;top:233px;width:1px;height:19px;background:#a0a0a0"></div>
<div class="t" style="left:1278px;top:239px;font-size:12px;transform:scaleX(0.933);transform-origin:0 0;margin-top:-1px">Vendor</div>
<div style="left:1368px;top:233px;width:1px;height:19px;background:#a0a0a0"></div>
<div style="left:1380px;top:238px;width:12px;height:12px;border:1px solid #555;background:#fff"></div>
<div style="left:36px;top:253px;width:49px;height:19px;background:#f4f4f4;border-bottom:1px solid #8c8c8c"></div>
<div style="left:86px;top:253px;width:1316px;height:19px;background:#fff;border-bottom:1px solid #dadada;border-right:1px solid #d0d0d0"></div>
<div style="left:85px;top:253px;width:1px;height:19px;background:#8c8c8c"></div>
<div style="left:155px;top:253px;width:1px;height:19px;background:#dcdcdc"></div>
<div style="left:253px;top:253px;width:1px;height:19px;background:#dcdcdc"></div>
<div style="left:436px;top:253px;width:1px;height:19px;background:#dcdcdc"></div>
<div style="left:583px;top:253px;width:1px;height:19px;background:#dcdcdc"></div>
<div style="left:729px;top:253px;width:1px;height:19px;background:#dcdcdc"></div>
<div style="left:875px;top:253px;width:1px;height:19px;background:#dcdcdc"></div>
<div style="left:1021px;top:253px;width:1px;height:19px;background:#dcdcdc"></div>
<div style="left:1124px;top:253px;width:1px;height:19px;background:#dcdcdc"></div>
<div style="left:1199px;top:253px;width:1px;height:19px;background:#dcdcdc"></div>
<div style="left:1273px;top:253px;width:1px;height:19px;background:#dcdcdc"></div>
<div style="left:1368px;top:253px;width:1px;height:19px;background:#dcdcdc"></div>
<div class="t" style="left:39px;top:257px;font-size:12px;transform:scaleX(0.933);transform-origin:0 0;margin-top:-1px">1</div>
<div class="t" style="left:89px;top:257px;font-size:12px;transform:scaleX(0.933);transform-origin:0 0;margin-top:-1px">545</div>
<div class="t" style="left:159px;top:257px;font-size:12px;transform:scaleX(0.933);transform-origin:0 0;margin-top:-1px">Clementine</div>
<div class="t" style="left:257px;top:257px;font-size:12px;transform:scaleX(0.933);transform-origin:0 0;margin-top:-1px">0</div>
<div class="t" style="left:440px;top:257px;font-size:12px;transform:scaleX(0.933);transform-origin:0 0;margin-top:-1px">1</div>
<div class="t" style="left:587px;top:257px;font-size:12px;transform:scaleX(0.933);transform-origin:0 0;margin-top:-1px">1.25</div>
<div class="t" style="left:733px;top:257px;font-size:12px;transform:scaleX(0.933);transform-origin:0 0;margin-top:-1px">1.25</div>
<div class="t" style="left:879px;top:257px;font-size:12px;transform:scaleX(0.933);transform-origin:0 0;margin-top:-1px">1.25</div>
<div class="t" style="left:1025px;top:257px;font-size:12px;transform:scaleX(0.933);transform-origin:0 0;margin-top:-1px">45</div>
<div class="t" style="left:1128px;top:257px;font-size:12px;transform:scaleX(0.933);transform-origin:0 0;margin-top:-1px">66.50</div>
<div class="t" style="left:1203px;top:257px;font-size:12px;transform:scaleX(0.933);transform-origin:0 0;margin-top:-1px">2992.50</div>
<div style="left:1274px;top:253px;width:93px;height:17px;background:#fff;border-left:2px solid #7a7a7a;border-top:2px solid #7a7a7a;border-right:1px solid #e4e4e4;border-bottom:1px solid #e4e4e4"></div>
<div style="left:1350px;top:255px;width:16px;height:15px;background:#f0f0f0;border-right:1px solid #d8d8d8;border-bottom:1px solid #d8d8d8"></div>
<div class="t" style="left:1278px;top:257px;font-size:12px;transform:scaleX(0.933);transform-origin:0 0;margin-top:-1px;letter-spacing:-0.35px">Mejia</div>
<div style="left:1355px;top:260px;width:0;height:0;border-left:3.5px solid transparent;border-right:3.5px solid transparent;border-top:4px solid #000"></div>
<div style="left:1379px;top:256px;width:12px;height:12px;border:1px solid #555;background:#fff"></div>
<div style="left:36px;top:272px;width:49px;height:19px;background:#f4f4f4;border-bottom:1px solid #8c8c8c"></div>
<div style="left:86px;top:272px;width:1316px;height:19px;background:#fff;border-bottom:1px solid #dadada;border-right:1px solid #d0d0d0"></div>
<div style="left:85px;top:272px;width:1px;height:19px;background:#8c8c8c"></div>
<div style="left:155px;top:272px;width:1px;height:19px;background:#dcdcdc"></div>
<div style="left:253px;top:272px;width:1px;height:19px;background:#dcdcdc"></div>
<div style="left:436px;top:272px;width:1px;height:19px;background:#dcdcdc"></div>
<div style="left:583px;top:272px;width:1px;height:19px;background:#dcdcdc"></div>
<div style="left:729px;top:272px;width:1px;height:19px;background:#dcdcdc"></div>
<div style="left:875px;top:272px;width:1px;height:19px;background:#dcdcdc"></div>
<div style="left:1021px;top:272px;width:1px;height:19px;background:#dcdcdc"></div>
<div style="left:1124px;top:272px;width:1px;height:19px;background:#dcdcdc"></div>
<div style="left:1199px;top:272px;width:1px;height:19px;background:#dcdcdc"></div>
<div style="left:1273px;top:272px;width:1px;height:19px;background:#dcdcdc"></div>
<div style="left:1368px;top:272px;width:1px;height:19px;background:#dcdcdc"></div>
<div class="t" style="left:39px;top:276px;font-size:12px;transform:scaleX(0.933);transform-origin:0 0;margin-top:-1px">2</div>
<div class="t" style="left:89px;top:276px;font-size:12px;transform:scaleX(0.933);transform-origin:0 0;margin-top:-1px">PJ-500ml</div>
<div class="t" style="left:159px;top:276px;font-size:12px;transform:scaleX(0.933);transform-origin:0 0;margin-top:-1px">Pineapple Juice...</div>
<div class="t" style="left:257px;top:276px;font-size:12px;transform:scaleX(0.933);transform-origin:0 0;margin-top:-1px">0</div>
<div class="t" style="left:440px;top:276px;font-size:12px;transform:scaleX(0.933);transform-origin:0 0;margin-top:-1px">1</div>
<div class="t" style="left:587px;top:276px;font-size:12px;transform:scaleX(0.933);transform-origin:0 0;margin-top:-1px">1.25</div>
<div class="t" style="left:733px;top:276px;font-size:12px;transform:scaleX(0.933);transform-origin:0 0;margin-top:-1px">1.25</div>
<div class="t" style="left:879px;top:276px;font-size:12px;transform:scaleX(0.933);transform-origin:0 0;margin-top:-1px">1.25</div>
<div class="t" style="left:1025px;top:276px;font-size:12px;transform:scaleX(0.933);transform-origin:0 0;margin-top:-1px">4</div>
<div class="t" style="left:1128px;top:276px;font-size:12px;transform:scaleX(0.933);transform-origin:0 0;margin-top:-1px">25.00</div>
<div class="t" style="left:1203px;top:276px;font-size:12px;transform:scaleX(0.933);transform-origin:0 0;margin-top:-1px">100.00</div>
<div style="left:1274px;top:272px;width:93px;height:17px;background:#fff;border-left:2px solid #7a7a7a;border-top:2px solid #7a7a7a;border-right:1px solid #e4e4e4;border-bottom:1px solid #e4e4e4"></div>
<div style="left:1350px;top:274px;width:16px;height:15px;background:#f0f0f0;border-right:1px solid #d8d8d8;border-bottom:1px solid #d8d8d8"></div>
<div class="t" style="left:1278px;top:276px;font-size:12px;transform:scaleX(0.933);transform-origin:0 0;margin-top:-1px;letter-spacing:-0.35px">ABC&nbsp; Superf...</div>
<div style="left:1355px;top:279px;width:0;height:0;border-left:3.5px solid transparent;border-right:3.5px solid transparent;border-top:4px solid #000"></div>
<div style="left:1379px;top:275px;width:12px;height:12px;border:1px solid #555;background:#fff"></div>
<div style="left:36px;top:291px;width:49px;height:19px;background:#f4f4f4;border-bottom:1px solid #8c8c8c"></div>
<div style="left:86px;top:291px;width:1316px;height:19px;background:#fff;border-bottom:1px solid #dadada;border-right:1px solid #d0d0d0"></div>
<div style="left:85px;top:291px;width:1px;height:19px;background:#8c8c8c"></div>
<div style="left:155px;top:291px;width:1px;height:19px;background:#dcdcdc"></div>
<div style="left:253px;top:291px;width:1px;height:19px;background:#dcdcdc"></div>
<div style="left:436px;top:291px;width:1px;height:19px;background:#dcdcdc"></div>
<div style="left:583px;top:291px;width:1px;height:19px;background:#dcdcdc"></div>
<div style="left:729px;top:291px;width:1px;height:19px;background:#dcdcdc"></div>
<div style="left:875px;top:291px;width:1px;height:19px;background:#dcdcdc"></div>
<div style="left:1021px;top:291px;width:1px;height:19px;background:#dcdcdc"></div>
<div style="left:1124px;top:291px;width:1px;height:19px;background:#dcdcdc"></div>
<div style="left:1199px;top:291px;width:1px;height:19px;background:#dcdcdc"></div>
<div style="left:1273px;top:291px;width:1px;height:19px;background:#dcdcdc"></div>
<div style="left:1368px;top:291px;width:1px;height:19px;background:#dcdcdc"></div>
<div class="t" style="left:39px;top:295px;font-size:12px;transform:scaleX(0.933);transform-origin:0 0;margin-top:-1px">3</div>
<div class="t" style="left:89px;top:295px;font-size:12px;transform:scaleX(0.933);transform-origin:0 0;margin-top:-1px">PJ-250ml</div>
<div class="t" style="left:159px;top:295px;font-size:12px;transform:scaleX(0.933);transform-origin:0 0;margin-top:-1px">Pineapple Juice...</div>
<div class="t" style="left:257px;top:295px;font-size:12px;transform:scaleX(0.933);transform-origin:0 0;margin-top:-1px">0</div>
<div class="t" style="left:440px;top:295px;font-size:12px;transform:scaleX(0.933);transform-origin:0 0;margin-top:-1px">1</div>
<div class="t" style="left:587px;top:295px;font-size:12px;transform:scaleX(0.933);transform-origin:0 0;margin-top:-1px">1.25</div>
<div class="t" style="left:733px;top:295px;font-size:12px;transform:scaleX(0.933);transform-origin:0 0;margin-top:-1px">1.25</div>
<div class="t" style="left:879px;top:295px;font-size:12px;transform:scaleX(0.933);transform-origin:0 0;margin-top:-1px">1.25</div>
<div class="t" style="left:1025px;top:295px;font-size:12px;transform:scaleX(0.933);transform-origin:0 0;margin-top:-1px">8</div>
<div class="t" style="left:1128px;top:295px;font-size:12px;transform:scaleX(0.933);transform-origin:0 0;margin-top:-1px">12.50</div>
<div class="t" style="left:1203px;top:295px;font-size:12px;transform:scaleX(0.933);transform-origin:0 0;margin-top:-1px">100.00</div>
<div style="left:1274px;top:291px;width:93px;height:17px;background:#fff;border-left:2px solid #7a7a7a;border-top:2px solid #7a7a7a;border-right:1px solid #e4e4e4;border-bottom:1px solid #e4e4e4"></div>
<div style="left:1350px;top:293px;width:16px;height:15px;background:#f0f0f0;border-right:1px solid #d8d8d8;border-bottom:1px solid #d8d8d8"></div>
<div class="t" style="left:1278px;top:295px;font-size:12px;transform:scaleX(0.933);transform-origin:0 0;margin-top:-1px;letter-spacing:-0.35px">ABC&nbsp; Superf...</div>
<div style="left:1355px;top:298px;width:0;height:0;border-left:3.5px solid transparent;border-right:3.5px solid transparent;border-top:4px solid #000"></div>
<div style="left:1379px;top:294px;width:12px;height:12px;border:1px solid #555;background:#fff"></div>
<div style="left:9px;top:224px;width:1px;height:98px;border-left:1px dotted #8c8c8c"></div>
<div style="left:15px;top:326px;width:3px;height:1px;border-top:1px dotted #8c8c8c"></div>
<div style="left:6px;top:322px;width:9px;height:9px;background:#fff;border:1px solid #9a9a9a"></div>
<div style="left:8px;top:326px;width:5px;height:1px;background:#000"></div>
<div style="left:8px;top:327px;width:5px;height:1px;background:#999"></div>
<div style="left:18px;top:314px;width:65px;height:21px;background:#336666;border-top:1px solid #f0f0f0;border-left:1px solid #f0f0f0;border-bottom:1px solid #1e3c3c"></div>
<div class="t" style="left:21px;top:320px;font-size:12px;transform:scaleX(0.933);transform-origin:0 0;margin-top:-1px;color:#fff">5</div>
<div class="gh" style="left:84px;top:314px;width:292px;height:21px;"></div>
<div class="t" style="left:88px;top:320px;font-size:12px;transform:scaleX(0.933);transform-origin:0 0;margin-top:-1px">111 Co.</div>
<div class="gh" style="left:376px;top:314px;width:740px;height:21px;"></div>
<div class="t" style="left:381px;top:320px;font-size:12px;transform:scaleX(0.933);transform-origin:0 0;margin-top:-1px">David</div>
<div class="t" style="left:917.0999999999999px;top:320px;font-size:12px;transform:scaleX(0.933);transform-origin:0 0;margin-top:-1px">102020</div>
<div class="gh" style="left:1116px;top:314px;width:155px;height:21px;"></div>
<div class="t" style="left:1121px;top:320px;font-size:12px;transform:scaleX(0.933);transform-origin:0 0;margin-top:-1px;color:#0000ff;text-decoration:underline">1164</div>
<div class="gh" style="left:1271px;top:314px;width:131px;height:21px;"></div>
<div class="t" style="left:1276px;top:320px;font-size:12px;transform:scaleX(0.933);transform-origin:0 0;margin-top:-1px;color:#0000ff;text-decoration:underline">2883</div>
<div style="left:27px;top:335px;width:1px;height:33px;border-left:1px dotted #8c8c8c"></div>
<div style="left:28px;top:369px;width:7px;height:1px;border-top:1px dotted #8c8c8c"></div>
<div style="left:36px;top:340px;width:1366px;height:20px;background:#f4f4f4;border-bottom:1px solid #888;border-right:1px solid #888"></div>
<div style="left:85px;top:340px;width:1px;height:19px;background:#a0a0a0"></div>
<div class="t" style="left:90px;top:346px;font-size:12px;transform:scaleX(0.933);transform-origin:0 0;margin-top:-1px">SKU</div>
<div style="left:155px;top:340px;width:1px;height:19px;background:#a0a0a0"></div>
<div class="t" style="left:160px;top:346px;font-size:12px;transform:scaleX(0.933);transform-origin:0 0;margin-top:-1px">Product</div>
<div style="left:253px;top:340px;width:1px;height:19px;background:#a0a0a0"></div>
<div class="t" style="left:258px;top:346px;font-size:12px;transform:scaleX(0.933);transform-origin:0 0;margin-top:-1px">Dimension</div>
<div style="left:436px;top:340px;width:1px;height:19px;background:#a0a0a0"></div>
<div style="left:583px;top:340px;width:1px;height:19px;background:#a0a0a0"></div>
<div style="left:729px;top:340px;width:1px;height:19px;background:#a0a0a0"></div>
<div style="left:875px;top:340px;width:1px;height:19px;background:#a0a0a0"></div>
<div style="left:1021px;top:340px;width:1px;height:19px;background:#a0a0a0"></div>
<div class="t" style="left:1026px;top:346px;font-size:12px;transform:scaleX(0.933);transform-origin:0 0;margin-top:-1px">Quantity</div>
<div style="left:1124px;top:340px;width:1px;height:19px;background:#a0a0a0"></div>
<div class="t" style="left:1129px;top:346px;font-size:12px;transform:scaleX(0.933);transform-origin:0 0;margin-top:-1px">Price</div>
<div style="left:1199px;top:340px;width:1px;height:19px;background:#a0a0a0"></div>
<div class="t" style="left:1204px;top:346px;font-size:12px;transform:scaleX(0.933);transform-origin:0 0;margin-top:-1px">Total</div>
<div style="left:1273px;top:340px;width:1px;height:19px;background:#a0a0a0"></div>
<div class="t" style="left:1278px;top:346px;font-size:12px;transform:scaleX(0.933);transform-origin:0 0;margin-top:-1px">Vendor</div>
<div style="left:1368px;top:340px;width:1px;height:19px;background:#a0a0a0"></div>
<div style="left:1380px;top:345px;width:12px;height:12px;border:1px solid #555;background:#fff"></div>
<div style="left:36px;top:360px;width:49px;height:19px;background:#f4f4f4;border-bottom:1px solid #8c8c8c"></div>
<div style="left:86px;top:360px;width:1316px;height:19px;background:#fff;border-bottom:1px solid #dadada;border-right:1px solid #d0d0d0"></div>
<div style="left:85px;top:360px;width:1px;height:19px;background:#8c8c8c"></div>
<div style="left:155px;top:360px;width:1px;height:19px;background:#dcdcdc"></div>
<div style="left:253px;top:360px;width:1px;height:19px;background:#dcdcdc"></div>
<div style="left:436px;top:360px;width:1px;height:19px;background:#dcdcdc"></div>
<div style="left:583px;top:360px;width:1px;height:19px;background:#dcdcdc"></div>
<div style="left:729px;top:360px;width:1px;height:19px;background:#dcdcdc"></div>
<div style="left:875px;top:360px;width:1px;height:19px;background:#dcdcdc"></div>
<div style="left:1021px;top:360px;width:1px;height:19px;background:#dcdcdc"></div>
<div style="left:1124px;top:360px;width:1px;height:19px;background:#dcdcdc"></div>
<div style="left:1199px;top:360px;width:1px;height:19px;background:#dcdcdc"></div>
<div style="left:1273px;top:360px;width:1px;height:19px;background:#dcdcdc"></div>
<div style="left:1368px;top:360px;width:1px;height:19px;background:#dcdcdc"></div>
<div class="t" style="left:39px;top:364px;font-size:12px;transform:scaleX(0.933);transform-origin:0 0;margin-top:-1px">1</div>
<div class="t" style="left:89px;top:364px;font-size:12px;transform:scaleX(0.933);transform-origin:0 0;margin-top:-1px">AS001</div>
<div class="t" style="left:159px;top:364px;font-size:12px;transform:scaleX(0.933);transform-origin:0 0;margin-top:-1px">Bundle</div>
<div class="t" style="left:257px;top:364px;font-size:12px;transform:scaleX(0.933);transform-origin:0 0;margin-top:-1px">0</div>
<div class="t" style="left:440px;top:364px;font-size:12px;transform:scaleX(0.933);transform-origin:0 0;margin-top:-1px">1</div>
<div class="t" style="left:587px;top:364px;font-size:12px;transform:scaleX(0.933);transform-origin:0 0;margin-top:-1px">1.25</div>
<div class="t" style="left:733px;top:364px;font-size:12px;transform:scaleX(0.933);transform-origin:0 0;margin-top:-1px">1.25</div>
<div class="t" style="left:879px;top:364px;font-size:12px;transform:scaleX(0.933);transform-origin:0 0;margin-top:-1px">1.25</div>
<div class="t" style="left:1025px;top:364px;font-size:12px;transform:scaleX(0.933);transform-origin:0 0;margin-top:-1px">1</div>
<div class="t" style="left:1128px;top:364px;font-size:12px;transform:scaleX(0.933);transform-origin:0 0;margin-top:-1px">8.97</div>
<div class="t" style="left:1203px;top:364px;font-size:12px;transform:scaleX(0.933);transform-origin:0 0;margin-top:-1px">8.97</div>
<div style="left:1274px;top:360px;width:93px;height:17px;background:#fff;border-left:2px solid #7a7a7a;border-top:2px solid #7a7a7a;border-right:1px solid #e4e4e4;border-bottom:1px solid #e4e4e4"></div>
<div style="left:1350px;top:362px;width:16px;height:15px;background:#f0f0f0;border-right:1px solid #d8d8d8;border-bottom:1px solid #d8d8d8"></div>
<div class="t" style="left:1278px;top:364px;font-size:12px;transform:scaleX(0.933);transform-origin:0 0;margin-top:-1px;letter-spacing:-0.35px">Shad</div>
<div style="left:1355px;top:367px;width:0;height:0;border-left:3.5px solid transparent;border-right:3.5px solid transparent;border-top:4px solid #000"></div>
<div style="left:1379px;top:363px;width:12px;height:12px;border:1px solid #555;background:#fff"></div>
<div style="left:9px;top:331px;width:1px;height:60px;border-left:1px dotted #8c8c8c"></div>
<div style="left:15px;top:395px;width:3px;height:1px;border-top:1px dotted #8c8c8c"></div>
<div style="left:6px;top:391px;width:9px;height:9px;background:#fff;border:1px solid #9a9a9a"></div>
<div style="left:8px;top:395px;width:5px;height:1px;background:#000"></div>
<div style="left:8px;top:396px;width:5px;height:1px;background:#999"></div>
<div style="left:18px;top:383px;width:65px;height:21px;background:#336666;border-top:1px solid #f0f0f0;border-left:1px solid #f0f0f0;border-bottom:1px solid #1e3c3c"></div>
<div class="t" style="left:21px;top:389px;font-size:12px;transform:scaleX(0.933);transform-origin:0 0;margin-top:-1px;color:#fff">6</div>
<div class="gh" style="left:84px;top:383px;width:292px;height:21px;"></div>
<div class="t" style="left:88px;top:389px;font-size:12px;transform:scaleX(0.933);transform-origin:0 0;margin-top:-1px">111 Co.</div>
<div class="gh" style="left:376px;top:383px;width:740px;height:21px;"></div>
<div class="t" style="left:381px;top:389px;font-size:12px;transform:scaleX(0.933);transform-origin:0 0;margin-top:-1px">David</div>
<div class="t" style="left:917.0999999999999px;top:389px;font-size:12px;transform:scaleX(0.933);transform-origin:0 0;margin-top:-1px">102020</div>
<div class="gh" style="left:1116px;top:383px;width:155px;height:21px;"></div>
<div class="t" style="left:1121px;top:389px;font-size:12px;transform:scaleX(0.933);transform-origin:0 0;margin-top:-1px;color:#0000ff;text-decoration:underline">1165</div>
<div class="gh" style="left:1271px;top:383px;width:131px;height:21px;"></div>
<div class="t" style="left:1276px;top:389px;font-size:12px;transform:scaleX(0.933);transform-origin:0 0;margin-top:-1px;color:#0000ff;text-decoration:underline">2884</div>
<div style="left:27px;top:404px;width:1px;height:33px;border-left:1px dotted #8c8c8c"></div>
<div style="left:28px;top:438px;width:7px;height:1px;border-top:1px dotted #8c8c8c"></div>
<div style="left:36px;top:409px;width:1366px;height:20px;background:#f4f4f4;border-bottom:1px solid #888;border-right:1px solid #888"></div>
<div style="left:85px;top:409px;width:1px;height:19px;background:#a0a0a0"></div>
<div class="t" style="left:90px;top:415px;font-size:12px;transform:scaleX(0.933);transform-origin:0 0;margin-top:-1px">SKU</div>
<div style="left:155px;top:409px;width:1px;height:19px;background:#a0a0a0"></div>
<div class="t" style="left:160px;top:415px;font-size:12px;transform:scaleX(0.933);transform-origin:0 0;margin-top:-1px">Product</div>
<div style="left:253px;top:409px;width:1px;height:19px;background:#a0a0a0"></div>
<div class="t" style="left:258px;top:415px;font-size:12px;transform:scaleX(0.933);transform-origin:0 0;margin-top:-1px">Dimension</div>
<div style="left:436px;top:409px;width:1px;height:19px;background:#a0a0a0"></div>
<div style="left:583px;top:409px;width:1px;height:19px;background:#a0a0a0"></div>
<div style="left:729px;top:409px;width:1px;height:19px;background:#a0a0a0"></div>
<div style="left:875px;top:409px;width:1px;height:19px;background:#a0a0a0"></div>
<div style="left:1021px;top:409px;width:1px;height:19px;background:#a0a0a0"></div>
<div class="t" style="left:1026px;top:415px;font-size:12px;transform:scaleX(0.933);transform-origin:0 0;margin-top:-1px">Quantity</div>
<div style="left:1124px;top:409px;width:1px;height:19px;background:#a0a0a0"></div>
<div class="t" style="left:1129px;top:415px;font-size:12px;transform:scaleX(0.933);transform-origin:0 0;margin-top:-1px">Price</div>
<div style="left:1199px;top:409px;width:1px;height:19px;background:#a0a0a0"></div>
<div class="t" style="left:1204px;top:415px;font-size:12px;transform:scaleX(0.933);transform-origin:0 0;margin-top:-1px">Total</div>
<div style="left:1273px;top:409px;width:1px;height:19px;background:#a0a0a0"></div>
<div class="t" style="left:1278px;top:415px;font-size:12px;transform:scaleX(0.933);transform-origin:0 0;margin-top:-1px">Vendor</div>
<div style="left:1368px;top:409px;width:1px;height:19px;background:#a0a0a0"></div>
<div style="left:1380px;top:414px;width:12px;height:12px;border:1px solid #555;background:#fff"></div>
<div style="left:36px;top:429px;width:49px;height:19px;background:#f4f4f4;border-bottom:1px solid #8c8c8c"></div>
<div style="left:86px;top:429px;width:1316px;height:19px;background:#fff;border-bottom:1px solid #dadada;border-right:1px solid #d0d0d0"></div>
<div style="left:85px;top:429px;width:1px;height:19px;background:#8c8c8c"></div>
<div style="left:155px;top:429px;width:1px;height:19px;background:#dcdcdc"></div>
<div style="left:253px;top:429px;width:1px;height:19px;background:#dcdcdc"></div>
<div style="left:436px;top:429px;width:1px;height:19px;background:#dcdcdc"></div>
<div style="left:583px;top:429px;width:1px;height:19px;background:#dcdcdc"></div>
<div style="left:729px;top:429px;width:1px;height:19px;background:#dcdcdc"></div>
<div style="left:875px;top:429px;width:1px;height:19px;background:#dcdcdc"></div>
<div style="left:1021px;top:429px;width:1px;height:19px;background:#dcdcdc"></div>
<div style="left:1124px;top:429px;width:1px;height:19px;background:#dcdcdc"></div>
<div style="left:1199px;top:429px;width:1px;height:19px;background:#dcdcdc"></div>
<div style="left:1273px;top:429px;width:1px;height:19px;background:#dcdcdc"></div>
<div style="left:1368px;top:429px;width:1px;height:19px;background:#dcdcdc"></div>
<div class="t" style="left:39px;top:433px;font-size:12px;transform:scaleX(0.933);transform-origin:0 0;margin-top:-1px">1</div>
<div class="t" style="left:89px;top:433px;font-size:12px;transform:scaleX(0.933);transform-origin:0 0;margin-top:-1px">AS002</div>
<div class="t" style="left:159px;top:433px;font-size:12px;transform:scaleX(0.933);transform-origin:0 0;margin-top:-1px">Bundle1</div>
<div class="t" style="left:257px;top:433px;font-size:12px;transform:scaleX(0.933);transform-origin:0 0;margin-top:-1px">0</div>
<div class="t" style="left:440px;top:433px;font-size:12px;transform:scaleX(0.933);transform-origin:0 0;margin-top:-1px">1</div>
<div class="t" style="left:587px;top:433px;font-size:12px;transform:scaleX(0.933);transform-origin:0 0;margin-top:-1px">1.25</div>
<div class="t" style="left:733px;top:433px;font-size:12px;transform:scaleX(0.933);transform-origin:0 0;margin-top:-1px">1.25</div>
<div class="t" style="left:879px;top:433px;font-size:12px;transform:scaleX(0.933);transform-origin:0 0;margin-top:-1px">1.25</div>
<div class="t" style="left:1025px;top:433px;font-size:12px;transform:scaleX(0.933);transform-origin:0 0;margin-top:-1px">1</div>
<div class="t" style="left:1128px;top:433px;font-size:12px;transform:scaleX(0.933);transform-origin:0 0;margin-top:-1px">16.50</div>
<div class="t" style="left:1203px;top:433px;font-size:12px;transform:scaleX(0.933);transform-origin:0 0;margin-top:-1px">16.50</div>
<div style="left:1274px;top:429px;width:93px;height:17px;background:#fff;border-left:2px solid #7a7a7a;border-top:2px solid #7a7a7a;border-right:1px solid #e4e4e4;border-bottom:1px solid #e4e4e4"></div>
<div style="left:1350px;top:431px;width:16px;height:15px;background:#f0f0f0;border-right:1px solid #d8d8d8;border-bottom:1px solid #d8d8d8"></div>
<div style="left:1355px;top:436px;width:0;height:0;border-left:3.5px solid transparent;border-right:3.5px solid transparent;border-top:4px solid #000"></div>
<div style="left:1379px;top:432px;width:12px;height:12px;border:1px solid #d4d4d4;background:#fff"></div>
<div style="left:9px;top:400px;width:1px;height:60px;border-left:1px dotted #8c8c8c"></div>
<div style="left:15px;top:464px;width:3px;height:1px;border-top:1px dotted #8c8c8c"></div>
<div style="left:6px;top:460px;width:9px;height:9px;background:#fff;border:1px solid #9a9a9a"></div>
<div style="left:8px;top:464px;width:5px;height:1px;background:#000"></div>
<div style="left:8px;top:465px;width:5px;height:1px;background:#999"></div>
<div style="left:18px;top:452px;width:65px;height:21px;background:#336666;border-top:1px solid #f0f0f0;border-left:1px solid #f0f0f0;border-bottom:1px solid #1e3c3c"></div>
<div class="t" style="left:21px;top:458px;font-size:12px;transform:scaleX(0.933);transform-origin:0 0;margin-top:-1px;color:#fff">7</div>
<div class="gh" style="left:84px;top:452px;width:292px;height:21px;"></div>
<div class="t" style="left:88px;top:458px;font-size:12px;transform:scaleX(0.933);transform-origin:0 0;margin-top:-1px">111 Co.</div>
<div class="gh" style="left:376px;top:452px;width:740px;height:21px;"></div>
<div class="t" style="left:381px;top:458px;font-size:12px;transform:scaleX(0.933);transform-origin:0 0;margin-top:-1px">David</div>
<div class="t" style="left:917.0999999999999px;top:458px;font-size:12px;transform:scaleX(0.933);transform-origin:0 0;margin-top:-1px">102020</div>
<div class="gh" style="left:1116px;top:452px;width:155px;height:21px;"></div>
<div class="t" style="left:1121px;top:458px;font-size:12px;transform:scaleX(0.933);transform-origin:0 0;margin-top:-1px;color:#0000ff;text-decoration:underline">1166</div>
<div class="gh" style="left:1271px;top:452px;width:131px;height:21px;"></div>
<div class="t" style="left:1276px;top:458px;font-size:12px;transform:scaleX(0.933);transform-origin:0 0;margin-top:-1px;color:#0000ff;text-decoration:underline">2885</div>
<div style="left:27px;top:473px;width:1px;height:33px;border-left:1px dotted #8c8c8c"></div>
<div style="left:28px;top:507px;width:7px;height:1px;border-top:1px dotted #8c8c8c"></div>
<div style="left:36px;top:478px;width:1366px;height:20px;background:#f4f4f4;border-bottom:1px solid #888;border-right:1px solid #888"></div>
<div style="left:85px;top:478px;width:1px;height:19px;background:#a0a0a0"></div>
<div class="t" style="left:90px;top:484px;font-size:12px;transform:scaleX(0.933);transform-origin:0 0;margin-top:-1px">SKU</div>
<div style="left:155px;top:478px;width:1px;height:19px;background:#a0a0a0"></div>
<div class="t" style="left:160px;top:484px;font-size:12px;transform:scaleX(0.933);transform-origin:0 0;margin-top:-1px">Product</div>
<div style="left:253px;top:478px;width:1px;height:19px;background:#a0a0a0"></div>
<div class="t" style="left:258px;top:484px;font-size:12px;transform:scaleX(0.933);transform-origin:0 0;margin-top:-1px">Dimension</div>
<div style="left:436px;top:478px;width:1px;height:19px;background:#a0a0a0"></div>
<div style="left:583px;top:478px;width:1px;height:19px;background:#a0a0a0"></div>
<div style="left:729px;top:478px;width:1px;height:19px;background:#a0a0a0"></div>
<div style="left:875px;top:478px;width:1px;height:19px;background:#a0a0a0"></div>
<div style="left:1021px;top:478px;width:1px;height:19px;background:#a0a0a0"></div>
<div class="t" style="left:1026px;top:484px;font-size:12px;transform:scaleX(0.933);transform-origin:0 0;margin-top:-1px">Quantity</div>
<div style="left:1124px;top:478px;width:1px;height:19px;background:#a0a0a0"></div>
<div class="t" style="left:1129px;top:484px;font-size:12px;transform:scaleX(0.933);transform-origin:0 0;margin-top:-1px">Price</div>
<div style="left:1199px;top:478px;width:1px;height:19px;background:#a0a0a0"></div>
<div class="t" style="left:1204px;top:484px;font-size:12px;transform:scaleX(0.933);transform-origin:0 0;margin-top:-1px">Total</div>
<div style="left:1273px;top:478px;width:1px;height:19px;background:#a0a0a0"></div>
<div class="t" style="left:1278px;top:484px;font-size:12px;transform:scaleX(0.933);transform-origin:0 0;margin-top:-1px">Vendor</div>
<div style="left:1368px;top:478px;width:1px;height:19px;background:#a0a0a0"></div>
<div style="left:1380px;top:483px;width:12px;height:12px;border:1px solid #555;background:#fff"></div>
<div style="left:36px;top:498px;width:49px;height:19px;background:#f4f4f4;border-bottom:1px solid #8c8c8c"></div>
<div style="left:86px;top:498px;width:1316px;height:19px;background:#fff;border-bottom:1px solid #dadada;border-right:1px solid #d0d0d0"></div>
<div style="left:85px;top:498px;width:1px;height:19px;background:#8c8c8c"></div>
<div style="left:155px;top:498px;width:1px;height:19px;background:#dcdcdc"></div>
<div style="left:253px;top:498px;width:1px;height:19px;background:#dcdcdc"></div>
<div style="left:436px;top:498px;width:1px;height:19px;background:#dcdcdc"></div>
<div style="left:583px;top:498px;width:1px;height:19px;background:#dcdcdc"></div>
<div style="left:729px;top:498px;width:1px;height:19px;background:#dcdcdc"></div>
<div style="left:875px;top:498px;width:1px;height:19px;background:#dcdcdc"></div>
<div style="left:1021px;top:498px;width:1px;height:19px;background:#dcdcdc"></div>
<div style="left:1124px;top:498px;width:1px;height:19px;background:#dcdcdc"></div>
<div style="left:1199px;top:498px;width:1px;height:19px;background:#dcdcdc"></div>
<div style="left:1273px;top:498px;width:1px;height:19px;background:#dcdcdc"></div>
<div style="left:1368px;top:498px;width:1px;height:19px;background:#dcdcdc"></div>
<div class="t" style="left:39px;top:502px;font-size:12px;transform:scaleX(0.933);transform-origin:0 0;margin-top:-1px">1</div>
<div class="t" style="left:89px;top:502px;font-size:12px;transform:scaleX(0.933);transform-origin:0 0;margin-top:-1px">C2</div>
<div class="t" style="left:159px;top:502px;font-size:12px;transform:scaleX(0.933);transform-origin:0 0;margin-top:-1px">Chicken Gizzard</div>
<div class="t" style="left:257px;top:502px;font-size:12px;transform:scaleX(0.933);transform-origin:0 0;margin-top:-1px">0</div>
<div class="t" style="left:440px;top:502px;font-size:12px;transform:scaleX(0.933);transform-origin:0 0;margin-top:-1px">1</div>
<div class="t" style="left:587px;top:502px;font-size:12px;transform:scaleX(0.933);transform-origin:0 0;margin-top:-1px">1.25</div>
<div class="t" style="left:733px;top:502px;font-size:12px;transform:scaleX(0.933);transform-origin:0 0;margin-top:-1px">1.25</div>
<div class="t" style="left:879px;top:502px;font-size:12px;transform:scaleX(0.933);transform-origin:0 0;margin-top:-1px">1.25</div>
<div class="t" style="left:1025px;top:502px;font-size:12px;transform:scaleX(0.933);transform-origin:0 0;margin-top:-1px">1</div>
<div class="t" style="left:1128px;top:502px;font-size:12px;transform:scaleX(0.933);transform-origin:0 0;margin-top:-1px">12.00</div>
<div class="t" style="left:1203px;top:502px;font-size:12px;transform:scaleX(0.933);transform-origin:0 0;margin-top:-1px">12.00</div>
<div style="left:1274px;top:498px;width:93px;height:17px;background:#fff;border-left:2px solid #7a7a7a;border-top:2px solid #7a7a7a;border-right:1px solid #e4e4e4;border-bottom:1px solid #e4e4e4"></div>
<div style="left:1350px;top:500px;width:16px;height:15px;background:#f0f0f0;border-right:1px solid #d8d8d8;border-bottom:1px solid #d8d8d8"></div>
<div class="t" style="left:1278px;top:502px;font-size:12px;transform:scaleX(0.933);transform-origin:0 0;margin-top:-1px;letter-spacing:-0.35px">Shad</div>
<div style="left:1355px;top:505px;width:0;height:0;border-left:3.5px solid transparent;border-right:3.5px solid transparent;border-top:4px solid #000"></div>
<div style="left:1379px;top:501px;width:12px;height:12px;border:1px solid #555;background:#fff"></div>
<div style="left:9px;top:469px;width:1px;height:60px;border-left:1px dotted #8c8c8c"></div>
<div style="left:15px;top:533px;width:3px;height:1px;border-top:1px dotted #8c8c8c"></div>
<div style="left:6px;top:529px;width:9px;height:9px;background:#fff;border:1px solid #9a9a9a"></div>
<div style="left:8px;top:533px;width:5px;height:1px;background:#000"></div>
<div style="left:8px;top:534px;width:5px;height:1px;background:#999"></div>
<div style="left:18px;top:521px;width:65px;height:21px;background:#336666;border-top:1px solid #f0f0f0;border-left:1px solid #f0f0f0;border-bottom:1px solid #1e3c3c"></div>
<div class="t" style="left:21px;top:527px;font-size:12px;transform:scaleX(0.933);transform-origin:0 0;margin-top:-1px;color:#fff">8</div>
<div class="gh" style="left:84px;top:521px;width:292px;height:21px;"></div>
<div class="t" style="left:88px;top:527px;font-size:12px;transform:scaleX(0.933);transform-origin:0 0;margin-top:-1px">111 Co.</div>
<div class="gh" style="left:376px;top:521px;width:740px;height:21px;"></div>
<div class="t" style="left:381px;top:527px;font-size:12px;transform:scaleX(0.933);transform-origin:0 0;margin-top:-1px">David</div>
<div class="t" style="left:917.0999999999999px;top:527px;font-size:12px;transform:scaleX(0.933);transform-origin:0 0;margin-top:-1px">102020</div>
<div class="gh" style="left:1116px;top:521px;width:155px;height:21px;"></div>
<div class="t" style="left:1121px;top:527px;font-size:12px;transform:scaleX(0.933);transform-origin:0 0;margin-top:-1px;color:#0000ff;text-decoration:underline">1170</div>
<div class="gh" style="left:1271px;top:521px;width:131px;height:21px;"></div>
<div class="t" style="left:1276px;top:527px;font-size:12px;transform:scaleX(0.933);transform-origin:0 0;margin-top:-1px;color:#0000ff;text-decoration:underline">2890</div>
<div style="left:27px;top:542px;width:1px;height:33px;border-left:1px dotted #8c8c8c"></div>
<div style="left:28px;top:576px;width:7px;height:1px;border-top:1px dotted #8c8c8c"></div>
<div style="left:27px;top:575px;width:1px;height:20px;border-left:1px dotted #8c8c8c"></div>
<div style="left:36px;top:547px;width:1366px;height:20px;background:#f4f4f4;border-bottom:1px solid #888;border-right:1px solid #888"></div>
<div style="left:85px;top:547px;width:1px;height:19px;background:#a0a0a0"></div>
<div class="t" style="left:90px;top:553px;font-size:12px;transform:scaleX(0.933);transform-origin:0 0;margin-top:-1px">SKU</div>
<div style="left:155px;top:547px;width:1px;height:19px;background:#a0a0a0"></div>
<div class="t" style="left:160px;top:553px;font-size:12px;transform:scaleX(0.933);transform-origin:0 0;margin-top:-1px">Product</div>
<div style="left:253px;top:547px;width:1px;height:19px;background:#a0a0a0"></div>
<div class="t" style="left:258px;top:553px;font-size:12px;transform:scaleX(0.933);transform-origin:0 0;margin-top:-1px">Dimension</div>
<div style="left:436px;top:547px;width:1px;height:19px;background:#a0a0a0"></div>
<div style="left:583px;top:547px;width:1px;height:19px;background:#a0a0a0"></div>
<div style="left:729px;top:547px;width:1px;height:19px;background:#a0a0a0"></div>
<div style="left:875px;top:547px;width:1px;height:19px;background:#a0a0a0"></div>
<div style="left:1021px;top:547px;width:1px;height:19px;background:#a0a0a0"></div>
<div class="t" style="left:1026px;top:553px;font-size:12px;transform:scaleX(0.933);transform-origin:0 0;margin-top:-1px">Quantity</div>
<div style="left:1124px;top:547px;width:1px;height:19px;background:#a0a0a0"></div>
<div class="t" style="left:1129px;top:553px;font-size:12px;transform:scaleX(0.933);transform-origin:0 0;margin-top:-1px">Price</div>
<div style="left:1199px;top:547px;width:1px;height:19px;background:#a0a0a0"></div>
<div class="t" style="left:1204px;top:553px;font-size:12px;transform:scaleX(0.933);transform-origin:0 0;margin-top:-1px">Total</div>
<div style="left:1273px;top:547px;width:1px;height:19px;background:#a0a0a0"></div>
<div class="t" style="left:1278px;top:553px;font-size:12px;transform:scaleX(0.933);transform-origin:0 0;margin-top:-1px">Vendor</div>
<div style="left:1368px;top:547px;width:1px;height:19px;background:#a0a0a0"></div>
<div style="left:1380px;top:552px;width:12px;height:12px;border:1px solid #555;background:#fff"></div>
<div style="left:36px;top:567px;width:49px;height:19px;background:#f4f4f4;border-bottom:1px solid #8c8c8c"></div>
<div style="left:86px;top:567px;width:1316px;height:19px;background:#fff;border-bottom:1px solid #dadada;border-right:1px solid #d0d0d0"></div>
<div style="left:85px;top:567px;width:1px;height:19px;background:#8c8c8c"></div>
<div style="left:155px;top:567px;width:1px;height:19px;background:#dcdcdc"></div>
<div style="left:253px;top:567px;width:1px;height:19px;background:#dcdcdc"></div>
<div style="left:436px;top:567px;width:1px;height:19px;background:#dcdcdc"></div>
<div style="left:583px;top:567px;width:1px;height:19px;background:#dcdcdc"></div>
<div style="left:729px;top:567px;width:1px;height:19px;background:#dcdcdc"></div>
<div style="left:875px;top:567px;width:1px;height:19px;background:#dcdcdc"></div>
<div style="left:1021px;top:567px;width:1px;height:19px;background:#dcdcdc"></div>
<div style="left:1124px;top:567px;width:1px;height:19px;background:#dcdcdc"></div>
<div style="left:1199px;top:567px;width:1px;height:19px;background:#dcdcdc"></div>
<div style="left:1273px;top:567px;width:1px;height:19px;background:#dcdcdc"></div>
<div style="left:1368px;top:567px;width:1px;height:19px;background:#dcdcdc"></div>
<div class="t" style="left:39px;top:571px;font-size:12px;transform:scaleX(0.933);transform-origin:0 0;margin-top:-1px">1</div>
<div class="t" style="left:89px;top:571px;font-size:12px;transform:scaleX(0.933);transform-origin:0 0;margin-top:-1px">B0465</div>
<div class="t" style="left:159px;top:571px;font-size:12px;transform:scaleX(0.933);transform-origin:0 0;margin-top:-1px">B0465 Tile</div>
<div class="t" style="left:257px;top:571px;font-size:12px;transform:scaleX(0.933);transform-origin:0 0;margin-top:-1px">1.95</div>
<div class="t" style="left:440px;top:571px;font-size:12px;transform:scaleX(0.933);transform-origin:0 0;margin-top:-1px">1</div>
<div class="t" style="left:587px;top:571px;font-size:12px;transform:scaleX(0.933);transform-origin:0 0;margin-top:-1px">1.25</div>
<div class="t" style="left:733px;top:571px;font-size:12px;transform:scaleX(0.933);transform-origin:0 0;margin-top:-1px">1.25</div>
<div class="t" style="left:879px;top:571px;font-size:12px;transform:scaleX(0.933);transform-origin:0 0;margin-top:-1px">1.25</div>
<div class="t" style="left:1025px;top:571px;font-size:12px;transform:scaleX(0.933);transform-origin:0 0;margin-top:-1px">1</div>
<div class="t" style="left:1128px;top:571px;font-size:12px;transform:scaleX(0.933);transform-origin:0 0;margin-top:-1px">30.00</div>
<div class="t" style="left:1203px;top:571px;font-size:12px;transform:scaleX(0.933);transform-origin:0 0;margin-top:-1px">30.00</div>
<div style="left:1274px;top:567px;width:93px;height:17px;background:#fff;border-left:2px solid #7a7a7a;border-top:2px solid #7a7a7a;border-right:1px solid #e4e4e4;border-bottom:1px solid #e4e4e4"></div>
<div style="left:1350px;top:569px;width:16px;height:15px;background:#f0f0f0;border-right:1px solid #d8d8d8;border-bottom:1px solid #d8d8d8"></div>
<div class="t" style="left:1278px;top:571px;font-size:12px;transform:scaleX(0.933);transform-origin:0 0;margin-top:-1px;letter-spacing:-0.35px">ABC&nbsp; Superf...</div>
<div style="left:1355px;top:574px;width:0;height:0;border-left:3.5px solid transparent;border-right:3.5px solid transparent;border-top:4px solid #000"></div>
<div style="left:1379px;top:570px;width:12px;height:12px;border:1px solid #555;background:#fff"></div>
<div style="left:36px;top:586px;width:49px;height:19px;background:#f4f4f4;border-bottom:1px solid #8c8c8c"></div>
<div style="left:86px;top:586px;width:1316px;height:19px;background:#fff;border-bottom:1px solid #dadada;border-right:1px solid #d0d0d0"></div>
<div style="left:85px;top:586px;width:1px;height:19px;background:#8c8c8c"></div>
<div style="left:155px;top:586px;width:1px;height:19px;background:#dcdcdc"></div>
<div style="left:253px;top:586px;width:1px;height:19px;background:#dcdcdc"></div>
<div style="left:436px;top:586px;width:1px;height:19px;background:#dcdcdc"></div>
<div style="left:583px;top:586px;width:1px;height:19px;background:#dcdcdc"></div>
<div style="left:729px;top:586px;width:1px;height:19px;background:#dcdcdc"></div>
<div style="left:875px;top:586px;width:1px;height:19px;background:#dcdcdc"></div>
<div style="left:1021px;top:586px;width:1px;height:19px;background:#dcdcdc"></div>
<div style="left:1124px;top:586px;width:1px;height:19px;background:#dcdcdc"></div>
<div style="left:1199px;top:586px;width:1px;height:19px;background:#dcdcdc"></div>
<div style="left:1273px;top:586px;width:1px;height:19px;background:#dcdcdc"></div>
<div style="left:1368px;top:586px;width:1px;height:19px;background:#dcdcdc"></div>
<div style="left:9px;top:538px;width:1px;height:50px;border-left:1px dotted #8c8c8c"></div>
</div>
<div style="left:1553px;top:133px;width:17px;height:636px;background:repeating-conic-gradient(#ececec 0 25%,#fcfcfc 0 50%) 0 0/2px 2px"></div>
<div style="left:1553px;top:133px;width:17px;height:18px;background:#f0f0f0;border:1px solid #c8c8c8"></div>
<div style="left:1557px;top:140px;width:0;height:0;border-left:4.5px solid transparent;border-right:4.5px solid transparent;border-bottom:5px solid #111"></div>
<div style="left:1553px;top:150px;width:17px;height:139px;background:#f0f0f0;border:1px solid #c8c8c8"></div>
<div style="left:1553px;top:752px;width:17px;height:17px;background:#f0f0f0;border-left:1px solid #f4f4f4;border-top:1px solid #f4f4f4;border-right:1px solid #a0a0a0;border-bottom:1px solid #a0a0a0"></div>
<div style="left:1557px;top:758px;width:0;height:0;border-left:4.5px solid transparent;border-right:4.5px solid transparent;border-top:5px solid #111"></div>
<div style="left:153px;top:800px;width:71px;height:21px;background:#efefef;border:1px solid #adadad;box-shadow:inset 0 0 0 2px #e2e2e2"></div>
<div class="t" style="left:166px;top:804px;font-size:12px;transform:scaleX(0.933);transform-origin:0 0;margin-top:-1px">Collapse</div>
<div style="left:1362px;top:800px;width:138px;height:21px;background:#efefef;border:1px solid #b0b0b0;box-shadow:inset 0 0 0 2px #e2e2e2"></div>
<svg style="position:absolute;left:1364px;top:802px" width="17" height="17" viewBox="0 0 17 17"><rect x="2" y="1.5" width="9.6" height="10" fill="#f7f2ec"/><path d="M1.6 1 V11.8 H11.9 V1" fill="none" stroke="#000" stroke-width="1.3"/><path d="M3.3 2.5 H10 M3.3 4.5 H10 M3.3 6.5 H10 M3.3 8.5 H10" stroke="#000" stroke-width="1.15" stroke-linecap="round"/><path d="M13.6 10 V14.7 H9.5" fill="none" stroke="#2b8ff0" stroke-width="1.5"/><path d="M10.5 12.6 L7.9 14.7 L10.5 16.8 Z" fill="#2b8ff0"/></svg>
<div class="t" style="left:1390px;top:803px;font-size:12.4px;font-weight:bold;letter-spacing:-0.3px">PROCESS ORDER</div>
<div style="left:1508px;top:800px;width:61px;height:21px;background:#efefef;border:1px solid #adadad;box-shadow:inset 0 0 0 2px #e2e2e2"></div>
<div class="t" style="left:1523px;top:805px;font-size:12px;transform:scaleX(0.933);transform-origin:0 0;margin-top:-1px">Close</div>
<div style="left:140px;top:830px;width:1441px;height:1px;background:#e0e0e0"></div>
<svg style="left:0;top:0" width="1581" height="833"><line x1="178" y1="121.5" x2="283" y2="160" stroke="#f3934a" stroke-width="1.1"/><line x1="178" y1="121.5" x2="272" y2="176" stroke="#f3934a" stroke-width="1.1"/></svg>
<div style="left:271px;top:159px;width:148px;height:100px;background:#fafafa;border:4px solid #f3934a;border-radius:2px"></div>
<div style="left:301px;top:180px;width:84px;height:53px;background:#f0f0f0;border:8px solid #c6c6c6;box-shadow:inset 0 0 0 1px #d6d6d6;filter:blur(0.5px)"></div>
<svg style="left:322px;top:186px;filter:blur(0.45px)" width="42" height="42"><g transform="translate(20.8,20.3)"><circle r="12.9" fill="#5a5c60"/><line x1="0" y1="-11" x2="0" y2="-15.2" stroke="#5a5c60" stroke-width="6.2" stroke-linecap="round" transform="rotate(0)"/><line x1="0" y1="-11" x2="0" y2="-15.2" stroke="#5a5c60" stroke-width="6.2" stroke-linecap="round" transform="rotate(45)"/><line x1="0" y1="-11" x2="0" y2="-15.2" stroke="#5a5c60" stroke-width="6.2" stroke-linecap="round" transform="rotate(90)"/><line x1="0" y1="-11" x2="0" y2="-15.2" stroke="#5a5c60" stroke-width="6.2" stroke-linecap="round" transform="rotate(135)"/><line x1="0" y1="-11" x2="0" y2="-15.2" stroke="#5a5c60" stroke-width="6.2" stroke-linecap="round" transform="rotate(180)"/><line x1="0" y1="-11" x2="0" y2="-15.2" stroke="#5a5c60" stroke-width="6.2" stroke-linecap="round" transform="rotate(225)"/><line x1="0" y1="-11" x2="0" y2="-15.2" stroke="#5a5c60" stroke-width="6.2" stroke-linecap="round" transform="rotate(270)"/><line x1="0" y1="-11" x2="0" y2="-15.2" stroke="#5a5c60" stroke-width="6.2" stroke-linecap="round" transform="rotate(315)"/><circle r="6.3" fill="#f0f0f0"/></g></svg>
<div style="left:550px;top:133px;width:541px;height:619px;background:#f0f0f0;border:2px solid #ec8a44"></div>
<div style="left:552px;top:135px;width:537px;height:31px;background:#fff"></div>
<div class="t" style="left:559px;top:146px;font-size:11.9px;color:#8a8a8a">Customize Columns</div>
<svg style="position:absolute;left:1068px;top:143px" width="13" height="13" viewBox="0 0 13 13"><path d="M1 1 L12 12 M12 1 L1 12" stroke="#777" stroke-width="1.1"/></svg>
<div class="t" style="left:561px;top:177px;font-size:12px;transform:scaleX(0.933);transform-origin:0 0;margin-top:-1px">Select the columns you want to display and order on screen</div>
<div style="left:562px;top:212px;width:315px;height:355px;border:1px solid #d9d9d9"></div>
<div style="left:567px;top:205px;width:90px;height:14px;background:#f0f0f0"></div>
<div class="t" style="left:571px;top:208px;font-size:11.4px;font-weight:bold;color:#e3642e">Columns name</div>
<div style="left:570px;top:223px;width:13px;height:13px;border-radius:50%;border:1px solid #333;background:#fff"></div>
<div style="left:573px;top:226px;width:7px;height:7px;border-radius:50%;background:#333"></div>
<div class="t" style="left:588px;top:225px;font-size:12px;transform:scaleX(0.933);transform-origin:0 0;margin-top:-1px">Main Grid</div>
<div style="left:663px;top:223px;width:13px;height:13px;border-radius:50%;border:1px solid #333;background:#fff"></div>
<div class="t" style="left:680px;top:225px;font-size:12px;transform:scaleX(0.933);transform-origin:0 0;margin-top:-1px">Sub Grid</div>
<div style="left:568px;top:242px;width:303px;height:317px;background:#fff;border:1px solid #828282"></div>
<div style="left:570px;top:244px;width:13px;height:13px;border:1px solid #cfcfcf;background:#fff"></div>
<svg style="position:absolute;left:570px;top:244px" width="13" height="13" viewBox="0 0 13 13"><polyline points="2.5,6.5 5,9.3 10.5,3.2" fill="none" stroke="#bdbdbd" stroke-width="1.3"/></svg>
<div class="t" style="left:587px;top:245px;font-size:12px;transform:scaleX(0.933);transform-origin:0 0;margin-top:-1px">Ref #</div>
<div style="left:570px;top:259px;width:13px;height:13px;border:1px solid #cfcfcf;background:#fff"></div>
<svg style="position:absolute;left:570px;top:259px" width="13" height="13" viewBox="0 0 13 13"><polyline points="2.5,6.5 5,9.3 10.5,3.2" fill="none" stroke="#bdbdbd" stroke-width="1.3"/></svg>
<div class="t" style="left:587px;top:260px;font-size:12px;transform:scaleX(0.933);transform-origin:0 0;margin-top:-1px">PO #</div>
<div style="left:570px;top:274px;width:13px;height:13px;border:1px solid #333;background:#fff"></div>
<div class="t" style="left:587px;top:275px;font-size:12px;transform:scaleX(0.933);transform-origin:0 0;margin-top:-1px">Ordered</div>
<div style="left:570px;top:289px;width:13px;height:13px;border:1px solid #cfcfcf;background:#fff"></div>
<svg style="position:absolute;left:570px;top:289px" width="13" height="13" viewBox="0 0 13 13"><polyline points="2.5,6.5 5,9.3 10.5,3.2" fill="none" stroke="#bdbdbd" stroke-width="1.3"/></svg>
<div class="t" style="left:587px;top:290px;font-size:12px;transform:scaleX(0.933);transform-origin:0 0;margin-top:-1px">Customer</div>
<div style="left:570px;top:304px;width:13px;height:13px;border:1px solid #333;background:#fff"></div>
<svg style="position:absolute;left:570px;top:304px" width="13" height="13" viewBox="0 0 13 13"><polyline points="2.5,6.5 5,9.3 10.5,3.2" fill="none" stroke="#333" stroke-width="1.3"/></svg>
<div class="t" style="left:587px;top:305px;font-size:12px;transform:scaleX(0.933);transform-origin:0 0;margin-top:-1px">Account #</div>
<div style="left:570px;top:319px;width:13px;height:13px;border:1px solid #333;background:#fff"></div>
<div class="t" style="left:587px;top:320px;font-size:12px;transform:scaleX(0.933);transform-origin:0 0;margin-top:-1px">Sales Rep</div>
<div style="left:570px;top:334px;width:13px;height:13px;border:1px solid #333;background:#fff"></div>
<div class="t" style="left:587px;top:335px;font-size:12px;transform:scaleX(0.933);transform-origin:0 0;margin-top:-1px">Payment Terms</div>
<div style="left:570px;top:349px;width:13px;height:13px;border:1px solid #333;background:#fff"></div>
<div class="t" style="left:587px;top:350px;font-size:12px;transform:scaleX(0.933);transform-origin:0 0;margin-top:-1px">Ship Date</div>
<div style="left:570px;top:364px;width:13px;height:13px;border:1px solid #333;background:#fff"></div>
<svg style="position:absolute;left:570px;top:364px" width="13" height="13" viewBox="0 0 13 13"><polyline points="2.5,6.5 5,9.3 10.5,3.2" fill="none" stroke="#333" stroke-width="1.3"/></svg>
<div class="t" style="left:587px;top:365px;font-size:12px;transform:scaleX(0.933);transform-origin:0 0;margin-top:-1px">Expected Date</div>
<div style="left:570px;top:379px;width:13px;height:13px;border:1px solid #333;background:#fff"></div>
<div class="t" style="left:587px;top:380px;font-size:12px;transform:scaleX(0.933);transform-origin:0 0;margin-top:-1px">Total Weight</div>
<div style="left:570px;top:394px;width:13px;height:13px;border:1px solid #333;background:#fff"></div>
<div class="t" style="left:587px;top:395px;font-size:12px;transform:scaleX(0.933);transform-origin:0 0;margin-top:-1px">Total Quantity</div>
<div style="left:570px;top:409px;width:13px;height:13px;border:1px solid #333;background:#fff"></div>
<svg style="position:absolute;left:570px;top:409px" width="13" height="13" viewBox="0 0 13 13"><polyline points="2.5,6.5 5,9.3 10.5,3.2" fill="none" stroke="#333" stroke-width="1.3"/></svg>
<div class="t" style="left:587px;top:410px;font-size:12px;transform:scaleX(0.933);transform-origin:0 0;margin-top:-1px">Bill to Name</div>
<div style="left:570px;top:424px;width:13px;height:13px;border:1px solid #333;background:#fff"></div>
<div class="t" style="left:587px;top:425px;font-size:12px;transform:scaleX(0.933);transform-origin:0 0;margin-top:-1px">Ship to Name</div>
<div style="left:570px;top:439px;width:13px;height:13px;border:1px solid #333;background:#fff"></div>
<div class="t" style="left:587px;top:440px;font-size:12px;transform:scaleX(0.933);transform-origin:0 0;margin-top:-1px">Bill to State</div>
<div style="left:570px;top:454px;width:13px;height:13px;border:1px solid #333;background:#fff"></div>
<div class="t" style="left:587px;top:455px;font-size:12px;transform:scaleX(0.933);transform-origin:0 0;margin-top:-1px">Ship to State</div>
<div style="left:570px;top:469px;width:13px;height:13px;border:1px solid #333;background:#fff"></div>
<div class="t" style="left:587px;top:470px;font-size:12px;transform:scaleX(0.933);transform-origin:0 0;margin-top:-1px">Bill to Zip</div>
<div style="left:570px;top:484px;width:13px;height:13px;border:1px solid #333;background:#fff"></div>
<div class="t" style="left:587px;top:485px;font-size:12px;transform:scaleX(0.933);transform-origin:0 0;margin-top:-1px">Ship to Zip</div>
<div style="left:570px;top:499px;width:13px;height:13px;border:1px solid #333;background:#fff"></div>
<svg style="position:absolute;left:570px;top:499px" width="13" height="13" viewBox="0 0 13 13"><polyline points="2.5,6.5 5,9.3 10.5,3.2" fill="none" stroke="#333" stroke-width="1.3"/></svg>
<div class="t" style="left:587px;top:500px;font-size:12px;transform:scaleX(0.933);transform-origin:0 0;margin-top:-1px">Bill to Company</div>
<div style="left:570px;top:514px;width:13px;height:13px;border:1px solid #333;background:#fff"></div>
<div class="t" style="left:587px;top:515px;font-size:12px;transform:scaleX(0.933);transform-origin:0 0;margin-top:-1px">Ship to Company</div>
<div style="left:570px;top:529px;width:13px;height:13px;border:1px solid #333;background:#fff"></div>
<div class="t" style="left:587px;top:530px;font-size:12px;transform:scaleX(0.933);transform-origin:0 0;margin-top:-1px">Cancel Date</div>
<div style="left:570px;top:544px;width:13px;height:13px;border:1px solid #333;background:#fff"></div>
<div class="t" style="left:587px;top:545px;font-size:12px;transform:scaleX(0.933);transform-origin:0 0;margin-top:-1px">Total</div>
<div style="left:883px;top:212px;width:194px;height:355px;border:1px solid #d9d9d9"></div>
<div style="left:889px;top:205px;width:148px;height:14px;background:#f0f0f0"></div>
<div class="t" style="left:892px;top:207px;font-size:11.8px;font-weight:bold;color:#e3642e">Selected column settings</div>
<div style="left:889px;top:234px;width:182px;height:92px;border:1px solid #d9d9d9"></div>
<div style="left:895px;top:228px;width:88px;height:12px;background:#f0f0f0"></div>
<div class="t" style="left:898px;top:230px;font-size:11.4px;color:#e3642e;transform:scaleX(0.9);transform-origin:0 0">Position &amp; Display</div>
<div style="left:896px;top:253px;width:78px;height:26px;background:#cccccc;border:1px solid #bfbfbf"></div>
<div class="t" style="left:896px;top:260px;width:78px;text-align:center;font-size:11.2px;color:#838383">Move Up</div>
<div style="left:986px;top:253px;width:78px;height:26px;background:#cccccc;border:1px solid #bfbfbf"></div>
<div class="t" style="left:986px;top:260px;width:78px;text-align:center;font-size:11.2px;color:#838383">Show</div>
<div style="left:896px;top:287px;width:78px;height:26px;background:#cccccc;border:1px solid #bfbfbf"></div>
<div class="t" style="left:896px;top:294px;width:78px;text-align:center;font-size:11.2px;color:#838383">Move Down</div>
<div style="left:986px;top:287px;width:78px;height:26px;background:#cccccc;border:1px solid #bfbfbf"></div>
<div class="t" style="left:986px;top:294px;width:78px;text-align:center;font-size:11.2px;color:#838383">Hide</div>
<div style="left:889px;top:345px;width:182px;height:104px;border:1px solid #d9d9d9"></div>
<div style="left:895px;top:339px;width:33px;height:12px;background:#f0f0f0"></div>
<div class="t" style="left:898px;top:341px;font-size:11.2px;color:#e3642e">Width</div>
<div style="left:910px;top:365px;width:13px;height:13px;border:1px solid #333;background:#fff"></div>
<div class="t" style="left:927px;top:366px;font-size:12px;transform:scaleX(0.933);transform-origin:0 0;margin-top:-1px">Autosize column content</div>
<div class="t" style="left:913px;top:392px;font-size:12px;transform:scaleX(0.933);transform-origin:0 0;margin-top:-1px">Fixed ( in pixels )</div>
<div style="left:1001px;top:387px;width:43px;height:20px;background:#f0f0f0;border:1px solid #d8d8d8;border-top-color:#fff;border-left-color:#fff;box-shadow:inset 1px 1px 0 #e0e0e0"></div>
<div style="left:911px;top:411px;width:134px;height:27px;background:#cccccc;border:1px solid #bfbfbf"></div>
<div class="t" style="left:911px;top:419px;width:134px;text-align:center;font-size:11.2px;color:#f4f4f4;text-shadow:1px 1px 0 #aaa">Apply Current Width</div>
<div style="left:883px;top:719px;width:85px;height:26px;background:#e1e1e1;border:2px solid #0078d7"></div>
<div class="t" style="left:892px;top:727px;font-size:12px;transform:scaleX(0.933);transform-origin:0 0;margin-top:-1px">Save &amp; Close</div>
<div style="left:1003px;top:719px;width:73px;height:26px;background:#e1e1e1;border:1px solid #adadad"></div>
<div class="t" style="left:1024px;top:726px;font-size:11.6px">Close</div>
</body></html>
